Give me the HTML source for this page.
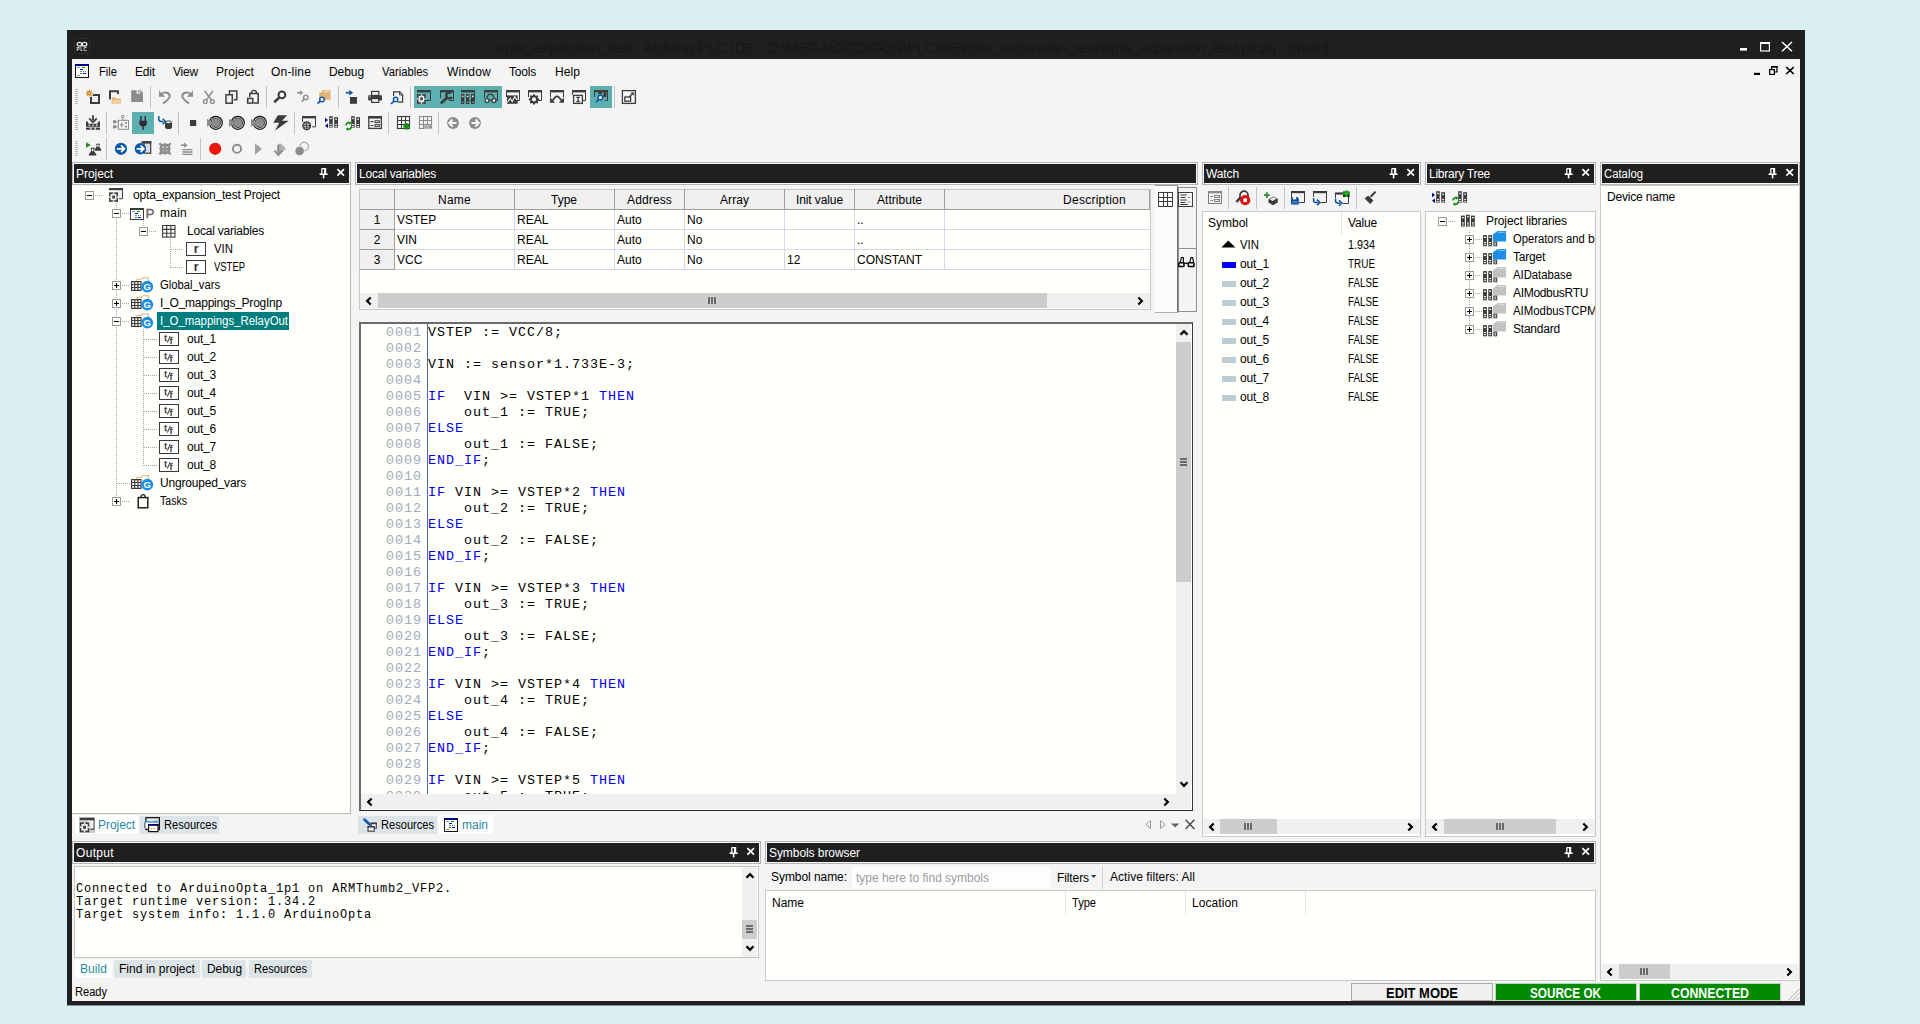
<!DOCTYPE html>
<html lang="en"><head><meta charset="utf-8"><title>opta_expansion_test - Arduino PLC IDE</title>
<style>
html,body{margin:0;padding:0}
body{width:1920px;height:1024px;overflow:hidden;background:#d9efef;position:relative;
 font-family:"Liberation Sans",sans-serif;font-size:12px;color:#000}
div,span.t,svg.i{position:absolute;box-sizing:border-box}
span.t{white-space:pre;display:block}
svg.i{overflow:visible}
.ph{background:#1f1f1f;border:1px solid #f8f8f8;outline:1px solid #b4b4b4}

</style></head>
<body>
<div style="left:67px;top:30px;width:1738px;height:975px;background:#1f1f1f;"></div>
<div style="left:67px;top:1005px;width:1738px;height:1px;background:#8a9696;"></div>
<div style="left:72px;top:59px;width:1728px;height:942px;background:#f4f4f4;"></div>
<svg class="i" style="left:74px;top:38px" width="16" height="16" viewBox="0 0 16 16"><rect x=".5" y=".5" width="15" height="15" rx="3" fill="#1c1c1c" stroke="#2e2e38" stroke-width="1"/><g fill="none" stroke="#f2f2f2" stroke-width="1.3"><ellipse cx="5.500" cy="6.200" rx="2.300" ry="1.900"/><ellipse cx="10.500" cy="6.200" rx="2.300" ry="1.900"/></g><text x="8" y="13.200" font-family="Liberation Sans, sans-serif" font-size="4.600" font-weight="bold" fill="#e8e8e8" text-anchor="middle" letter-spacing=".6">PLC</text></svg>
<span class="t" style="top:37.30px;font:15px/21px 'Liberation Sans',sans-serif;color:#17171b;left:497px;letter-spacing:-0.200px;">opta<span style="position:relative;top:-1px">_</span>expansion<span style="position:relative;top:-1px">_</span>test - Arduino PLC IDE - D:\MEGA\CODIGOS\PLCIDE\opta<span style="position:relative;top:-1px">_</span>expansion<span style="position:relative;top:-1px">_</span>test\opta<span style="position:relative;top:-1px">_</span>expansion<span style="position:relative;top:-1px">_</span>test.plcprj - [main]</span>
<svg class="i" style="left:1736px;top:38px" width="62" height="16" viewBox="0 0 62 16"><rect x="4" y="10" width="7" height="2.600" fill="#fff"/><rect x="24.600" y="4.800" width="8.800" height="8.200" fill="none" stroke="#fff" stroke-width="1.200"/><rect x="24" y="4" width="10" height="2" fill="#fff"/><path d="M46 4l10 9.200M56 4L46 13.200" stroke="#fff" stroke-width="1.500"/></svg>
<svg class="i" style="left:1750px;top:62px" width="48" height="16" viewBox="0 0 48 16"><rect x="4" y="10.800" width="6" height="2.200" fill="#000"/><rect x="19.600" y="7.600" width="4.800" height="4.800" fill="none" stroke="#000" stroke-width="1.200"/><path d="M21.600 7V4.600h5.400V10h-2.200" fill="none" stroke="#000" stroke-width="1.200"/><rect x="21" y="4" width="6.600" height="1.600" fill="#000"/><path d="M36.200 5.200l7.600 6.800M43.800 5.200l-7.600 6.800" stroke="#000" stroke-width="1.600"/></svg>
<svg class="i" style="left:75px;top:64px" width="14" height="14" viewBox="0 0 14 14"><g shape-rendering="crispEdges"><rect x="0" y="0" width="14" height="14" fill="#111"/><rect x="1" y="2" width="12" height="11" fill="#fff"/><rect x="0" y="0" width="14" height="2" fill="#000080"/><rect x="2" y="3" width="3" height="1" fill="#909090"/><rect x="7" y="3" width="3" height="1" fill="#00a000"/><rect x="5" y="5" width="3" height="1" fill="#0000ff"/><rect x="5" y="7" width="2" height="1" fill="#909090"/><rect x="8" y="7" width="1" height="1" fill="#00a000"/><rect x="10" y="7" width="1" height="1" fill="#909090"/><rect x="5" y="9" width="2" height="1" fill="#00a000"/><rect x="8" y="9" width="3" height="1" fill="#0000ff"/><rect x="2" y="11" width="3" height="1" fill="#909090"/></g></svg>
<span class="t" style="top:64.34px;font:12px/17px 'Liberation Sans',sans-serif;color:#000;left:99px;transform:scaleX(0.9305);transform-origin:0 0;">File</span>
<span class="t" style="top:64.34px;font:12px/17px 'Liberation Sans',sans-serif;color:#000;left:135px;letter-spacing:-0.172px;">Edit</span>
<span class="t" style="top:64.34px;font:12px/17px 'Liberation Sans',sans-serif;color:#000;left:173px;letter-spacing:-0.199px;">View</span>
<span class="t" style="top:64.34px;font:12px/17px 'Liberation Sans',sans-serif;color:#000;left:216px;letter-spacing:0.092px;">Project</span>
<span class="t" style="top:64.34px;font:12px/17px 'Liberation Sans',sans-serif;color:#000;left:271px;letter-spacing:0.188px;">On-line</span>
<span class="t" style="top:64.34px;font:12px/17px 'Liberation Sans',sans-serif;color:#000;left:329px;letter-spacing:-0.075px;">Debug</span>
<span class="t" style="top:64.34px;font:12px/17px 'Liberation Sans',sans-serif;color:#000;left:382px;transform:scaleX(0.9361);transform-origin:0 0;">Variables</span>
<span class="t" style="top:64.34px;font:12px/17px 'Liberation Sans',sans-serif;color:#000;left:447px;letter-spacing:0.219px;">Window</span>
<span class="t" style="top:64.34px;font:12px/17px 'Liberation Sans',sans-serif;color:#000;left:509px;letter-spacing:-0.203px;">Tools</span>
<span class="t" style="top:64.34px;font:12px/17px 'Liberation Sans',sans-serif;color:#000;left:555px;letter-spacing:0.078px;">Help</span>
<div style="left:75px;top:89px;width:3px;height:1px;background:#b8b8b8;"></div>
<div style="left:75px;top:91px;width:3px;height:1px;background:#b8b8b8;"></div>
<div style="left:75px;top:93px;width:3px;height:1px;background:#b8b8b8;"></div>
<div style="left:75px;top:95px;width:3px;height:1px;background:#b8b8b8;"></div>
<div style="left:75px;top:97px;width:3px;height:1px;background:#b8b8b8;"></div>
<div style="left:75px;top:99px;width:3px;height:1px;background:#b8b8b8;"></div>
<div style="left:75px;top:101px;width:3px;height:1px;background:#b8b8b8;"></div>
<div style="left:75px;top:103px;width:3px;height:1px;background:#b8b8b8;"></div>
<svg class="i" style="left:85px;top:89px" width="16" height="16" viewBox="0 0 16 16"><rect x="6" y="6" width="8" height="8" fill="none" stroke="#3c3c3c" stroke-width="2"/><circle cx="4.3" cy="4.2" r="3.9" fill="#f4f4f4"/><g stroke="#d47a00" stroke-width="1.1"><path d="M4.3 .8v6.8M.9 4.2h6.8M1.9 1.8l4.8 4.8M6.7 1.8L1.9 6.6"/></g><circle cx="4.3" cy="4.2" r="1.2" fill="#f4f4f4" stroke="#d47a00" stroke-width=".8"/></svg>
<svg class="i" style="left:107px;top:89px" width="16" height="16" viewBox="0 0 16 16"><path d="M3 10.5V2.2h8V5" fill="none" stroke="#3c3c3c" stroke-width="2"/><path d="M5.2 8.2h3l1 1.2h4.6v5.4H4.4z" fill="#e2b577"/><path d="M6.6 11h7.6l-1.2 3.8H4.6z" fill="#efd0a0"/></svg>
<svg class="i" style="left:129px;top:89px" width="16" height="16" viewBox="0 0 16 16"><path d="M2.2 1.3h9.6L14 3.5V13H2.2z" fill="#8c8c8c"/><rect x="7.6" y="1.3" width="3.6" height="3.4" fill="#f4f4f4"/><rect x="9.3" y="1.3" width="1.2" height="2.4" fill="#8c8c8c"/></svg>
<div style="left:150px;top:86px;width:1px;height:22px;background:#c4c4c4;"></div>
<svg class="i" style="left:157px;top:89px" width="16" height="16" viewBox="0 0 16 16"><path d="M4.2 5.2C8 2 13.2 3.8 12.6 7.6 12.2 10 9 12.2 6 14.4" fill="none" stroke="#8c8c8c" stroke-width="1.9" stroke-linecap="butt"/><path d="M2 1.6v6.2h6.2z" fill="#8c8c8c"/></svg>
<svg class="i" style="left:179px;top:89px" width="16" height="16" viewBox="0 0 16 16"><g transform="translate(16 0) scale(-1 1)"><path d="M4.2 5.2C8 2 13.2 3.8 12.6 7.6 12.2 10 9 12.2 6 14.4" fill="none" stroke="#8c8c8c" stroke-width="1.9" stroke-linecap="butt"/><path d="M2 1.6v6.2h6.2z" fill="#8c8c8c"/></g></svg>
<svg class="i" style="left:201px;top:89px" width="16" height="16" viewBox="0 0 16 16"><g fill="none" stroke="#8c8c8c" stroke-width="1.3"><circle cx="4.3" cy="12.6" r="1.9"/><circle cx="11.4" cy="12.6" r="1.9"/><path d="M3.6 1.6l6.9 9.6M12 1.6L5.2 11.2" stroke-width="1.5"/></g></svg>
<svg class="i" style="left:223px;top:89px" width="16" height="16" viewBox="0 0 16 16"><path d="M6.5 5V2h7.3v8.8h-3" fill="none" stroke="#3c3c3c" stroke-width="1.5"/><rect x="3" y="5.8" width="6.3" height="8.4" fill="none" stroke="#3c3c3c" stroke-width="1.5"/></svg>
<svg class="i" style="left:245px;top:89px" width="16" height="16" viewBox="0 0 16 16"><path d="M8.6 14H13.2V4.4H4.8V8" fill="none" stroke="#3c3c3c" stroke-width="1.5"/><path d="M6.4 4.4c0-4 5.2-4 5.2 0" fill="none" stroke="#3c3c3c" stroke-width="1.4"/><rect x="2.7" y="9.4" width="5" height="4.7" fill="none" stroke="#3c3c3c" stroke-width="1.5"/></svg>
<div style="left:266px;top:86px;width:1px;height:22px;background:#c4c4c4;"></div>
<svg class="i" style="left:272.0px;top:89px" width="16" height="16" viewBox="0 0 16 16"><circle cx="9.9" cy="5.9" r="3.4" fill="none" stroke="#3c3c3c" stroke-width="2"/><path d="M7.4 8.4L2.2 13.3" stroke="#3c3c3c" stroke-width="2.6" stroke-linecap="butt"/></svg>
<svg class="i" style="left:294.0px;top:89px" width="16" height="16" viewBox="0 0 16 16"><path d="M3 3.7h4" stroke="#8c8c8c" stroke-width="1.5"/><path d="M6 1.2l3.3 2.5L6 6.3z" fill="#8c8c8c"/><circle cx="11.8" cy="8.4" r="2.2" fill="none" stroke="#8c8c8c" stroke-width="1.3"/><path d="M10.2 10L7.6 12.8" stroke="#8c8c8c" stroke-width="1.6"/></svg>
<svg class="i" style="left:316.0px;top:89px" width="16" height="16" viewBox="0 0 16 16"><path d="M5.8 1.3h8.8v9.5H3.2V3.6h2.6z" fill="#e2b577"/><rect x="8" y="2.4" width="5.2" height=".9" fill="#f6e6cc"/><circle cx="6" cy="10.4" r="2.3" fill="#f4f4f4" stroke="#0a56a8" stroke-width="1.4"/><path d="M4.3 12.1L1.5 14.7" stroke="#0a56a8" stroke-width="1.7"/></svg>
<div style="left:338px;top:86px;width:1px;height:22px;background:#c4c4c4;"></div>
<svg class="i" style="left:344.0px;top:89px" width="16" height="16" viewBox="0 0 16 16"><path d="M1.8 3.7h4.4" stroke="#0a56a8" stroke-width="1.7"/><path d="M5.2 .9l4 2.8-4 2.9z" fill="#0a56a8"/><rect x="6" y="8" width="7" height="6.8" fill="#3c3c3c"/></svg>
<svg class="i" style="left:366.0px;top:89px" width="16" height="16" viewBox="0 0 16 16"><rect x="5.6" y="2.4" width="7.2" height="4" fill="#f4f4f4" stroke="#3c3c3c" stroke-width="1.2"/><rect x="2.2" y="6.2" width="13.8" height="5.4" rx=".8" fill="#3c3c3c"/><rect x="5.6" y="9.6" width="7.2" height="3.8" fill="#f4f4f4" stroke="#3c3c3c" stroke-width="1.2"/><rect x="3.4" y="7.4" width="1.2" height="1" fill="#f4f4f4"/></svg>
<svg class="i" style="left:389px;top:89px" width="16" height="16" viewBox="0 0 16 16"><path d="M4.6 7V2.9h6.2l2.8 2.8v7.4H8.6" fill="none" stroke="#3c3c3c" stroke-width="1.2"/><path d="M10.6 3v3h3" fill="none" stroke="#3c3c3c" stroke-width="1"/><circle cx="6.6" cy="10.4" r="2.2" fill="#f4f4f4" stroke="#0a56a8" stroke-width="1.4"/><path d="M5 12L2 14.8" stroke="#0a56a8" stroke-width="1.7"/></svg>
<div style="left:410px;top:86px;width:1px;height:22px;background:#c4c4c4;"></div>
<div style="left:414px;top:86px;width:22px;height:22px;background:#5cb0b0;"></div>
<svg class="i" style="left:417px;top:89px" width="16" height="16" viewBox="0 0 16 16"><path d="M0 1h14v2.4H0z" fill="#3c3c3c"/><path d="M13.5 3v8.5H9" fill="none" stroke="#3c3c3c" stroke-width="1"/><path d="M0 5.2h8.8v9.6H0z" fill="#3c3c3c"/><rect x="1.6" y="6.8" width="5.6" height="6.4" fill="#e4eeee"/><rect x="3.2" y="8.4" width="2.6" height="2.8" fill="#3c3c3c"/><rect x="3.8" y="5.2" width="1.4" height="1.6" fill="#e4eeee"/><rect x="3.8" y="13.2" width="1.4" height="1.6" fill="#e4eeee"/><rect x="0" y="9.2" width="1.6" height="1.4" fill="#e4eeee"/><rect x="7.2" y="9.2" width="1.6" height="1.4" fill="#e4eeee"/></svg>
<div style="left:436px;top:86px;width:22px;height:22px;background:#5cb0b0;"></div>
<svg class="i" style="left:440.0px;top:89px" width="16" height="16" viewBox="0 0 16 16"><path d="M0 1h14v2.4H0z" fill="#3c3c3c"/><path d="M13.5 3v8.5H9" fill="none" stroke="#3c3c3c" stroke-width="1"/><path d="M11.200 4.200a3 3 0 1 0 .6 3.800" fill="none" stroke="#3c3c3c" stroke-width="2.500"/><path d="M7.600 8.200L.8 14.400" stroke="#3c3c3c" stroke-width="2.700"/><path d="M.5 3v6" stroke="#3c3c3c" stroke-width="1"/></svg>
<div style="left:458px;top:86px;width:22px;height:22px;background:#5cb0b0;"></div>
<svg class="i" style="left:461px;top:89px" width="16" height="16" viewBox="0 0 16 16"><path d="M0 1h14v2.4H0z" fill="#3c3c3c"/><path d="M13.5 3v8.5H9" fill="none" stroke="#3c3c3c" stroke-width="1"/><rect x="0" y="5" width="3.3" height="10" fill="#3c3c3c"/><rect x="5" y="5" width="3.3" height="10" fill="#3c3c3c"/><rect x="10" y="5" width="3.6" height="10" fill="#3c3c3c"/><rect x=".9" y="6.6" width="1.5" height="1.6" fill="#e4eeee"/><rect x="5.9" y="6.6" width="1.5" height="1.6" fill="#e4eeee"/><rect x="11" y="6.6" width="1.6" height="1.6" fill="#e4eeee"/><rect x=".9" y="12.6" width="1.5" height="1.2" fill="#60b0b0"/><rect x="5.9" y="12.6" width="1.5" height="1.2" fill="#60b0b0"/><rect x="11" y="12.6" width="1.6" height="1.2" fill="#60b0b0"/></svg>
<div style="left:480px;top:86px;width:22px;height:22px;background:#5cb0b0;"></div>
<svg class="i" style="left:484.0px;top:89px" width="16" height="16" viewBox="0 0 16 16"><path d="M0 1h14v2.4H0z" fill="#3c3c3c"/><path d="M13.5 3v8.5H9" fill="none" stroke="#3c3c3c" stroke-width="1"/><g fill="#e8f2f2" stroke="#3c3c3c" stroke-width="1.3"><circle cx="3" cy="11.6" r="2"/><circle cx="10" cy="11.6" r="2"/></g><path d="M2.4 9.6L4.6 5.4h3.6l2.6 4.4M5 11.2h3" fill="none" stroke="#3c3c3c" stroke-width="1.2"/><path d="M.5 3v6" stroke="#3c3c3c"/></svg>
<svg class="i" style="left:506.0px;top:89px" width="16" height="16" viewBox="0 0 16 16"><path d="M0 1h14v2.4H0z" fill="#3c3c3c"/><path d="M13.5 3v8.5H9" fill="none" stroke="#3c3c3c" stroke-width="1"/><path d="M.5 3v5" stroke="#3c3c3c"/><path d="M1 6.4h10.6v8.4H1z" fill="#3c3c3c"/><path d="M1.4 13.4l2.8-4.2 2 3.4 2.6-5 2 3.4" fill="none" stroke="#f4f4f4" stroke-width="1.1"/></svg>
<svg class="i" style="left:528.0px;top:89px" width="16" height="16" viewBox="0 0 16 16"><path d="M0 1h14v2.4H0z" fill="#3c3c3c"/><path d="M13.5 3v8.5H9" fill="none" stroke="#3c3c3c" stroke-width="1"/><path d="M.5 3v5" stroke="#3c3c3c"/><circle cx="6" cy="10.4" r="3.1" fill="none" stroke="#3c3c3c" stroke-width="2"/><g stroke="#3c3c3c" stroke-width="1.7"><path d="M6 5.2v2M6 13.6v2M.8 10.4h2M9.2 10.4h2M2.3 6.7l1.4 1.4M8.3 12.7l1.4 1.4M9.7 6.7L8.3 8.1M3.7 12.7l-1.4 1.4"/></g><circle cx="6" cy="10.4" r="1.1" fill="#f4f4f4"/></svg>
<svg class="i" style="left:550.0px;top:89px" width="16" height="16" viewBox="0 0 16 16"><path d="M0 1h14v2.4H0z" fill="#3c3c3c"/><path d="M.5 3v5M13.5 3v5" stroke="#3c3c3c"/><path d="M0 8.6l0 5.2h5.2z" fill="#3c3c3c"/><path d="M14 8.6v5.2H8.8z" fill="#3c3c3c"/><path d="M2 12l3-3.6c1.400-1.400 2.600-1.400 4 0L12 12" fill="none" stroke="#3c3c3c" stroke-width="1.7"/></svg>
<svg class="i" style="left:572.0px;top:89px" width="16" height="16" viewBox="0 0 16 16"><path d="M0 1h14v2.4H0z" fill="#3c3c3c"/><path d="M13.5 3v8.5H9" fill="none" stroke="#3c3c3c" stroke-width="1"/><path d="M.5 3v3" stroke="#3c3c3c"/><rect x="1.6" y="6.4" width="8.800" height="8" fill="#f4f4f4" stroke="#3c3c3c" stroke-width="1.3"/><path d="M4.400 8.400h3.400M4.400 12.600h3.400M6.100 8.400v4.200" stroke="#3c3c3c" stroke-width="1.300"/></svg>
<div style="left:590px;top:86px;width:22px;height:22px;background:#5cb0b0;"></div>
<svg class="i" style="left:594.0px;top:89px" width="16" height="16" viewBox="0 0 16 16"><path d="M0 1h14v2.2H0z" fill="#3c3c3c"/><path d="M.5 3v5M13.500 3v8.500H11" fill="none" stroke="#3c3c3c"/><rect x="4.400" y="2.600" width="3.600" height="2.600" fill="#3c3c3c"/><rect x="9.400" y="2.600" width="3" height="5.400" fill="#3c3c3c"/><circle cx="6.400" cy="8.600" r="2.400" fill="#e8f4f4" stroke="#0a56a8" stroke-width="1.400"/><path d="M4.800 10.400L2 13.200" stroke="#0a56a8" stroke-width="1.800"/></svg>
<div style="left:614px;top:86px;width:1px;height:22px;background:#c4c4c4;"></div>
<svg class="i" style="left:621px;top:89px" width="16" height="16" viewBox="0 0 16 16"><rect x="1.400" y="1.600" width="13" height="12.800" fill="none" stroke="#3c3c3c" stroke-width="1.300"/><rect x="3.800" y="8" width="5.800" height="4.200" fill="none" stroke="#3c3c3c" stroke-width="1.300"/><path d="M8 8.200l4.400-4.400" stroke="#3c3c3c" stroke-width="1.300"/><path d="M9.400 3.400h3.400v3.400z" fill="#3c3c3c"/></svg>
<div style="left:75px;top:115px;width:3px;height:1px;background:#b8b8b8;"></div>
<div style="left:75px;top:117px;width:3px;height:1px;background:#b8b8b8;"></div>
<div style="left:75px;top:119px;width:3px;height:1px;background:#b8b8b8;"></div>
<div style="left:75px;top:121px;width:3px;height:1px;background:#b8b8b8;"></div>
<div style="left:75px;top:123px;width:3px;height:1px;background:#b8b8b8;"></div>
<div style="left:75px;top:125px;width:3px;height:1px;background:#b8b8b8;"></div>
<div style="left:75px;top:127px;width:3px;height:1px;background:#b8b8b8;"></div>
<div style="left:75px;top:129px;width:3px;height:1px;background:#b8b8b8;"></div>
<svg class="i" style="left:85px;top:115px" width="16" height="16" viewBox="0 0 16 16"><path d="M8 .3v5" stroke="#3c3c3c" stroke-width="1.800"/><path d="M4.200 3.400L8 7.200l3.800-3.800" fill="none" stroke="#3c3c3c" stroke-width="1.700"/><path d="M1 6.400h1.600l.9 2.400h9l.9-2.400H15v8.400H1z" fill="#3c3c3c"/><g fill="#f4f4f4"><rect x="3.600" y="9.600" width="1.500" height="1.300"/><rect x="7.250" y="9.600" width="1.500" height="1.300"/><rect x="10.900" y="9.600" width="1.500" height="1.300"/><rect x="1" y="11.800" width="14" height=".8"/><rect x="5.200" y="12.600" width="1.300" height="2.200"/><rect x="9.500" y="12.600" width="1.300" height="2.200"/></g></svg>
<div style="left:106px;top:112px;width:1px;height:22px;background:#c4c4c4;"></div>
<svg class="i" style="left:113px;top:115px" width="16" height="16" viewBox="0 0 16 16"><g fill="none" stroke="#8c8c8c" stroke-width="1"><rect x="5.300" y="5.300" width="10.200" height="9"/><rect x=".5" y="5.800" width="2" height="2"/><rect x=".5" y="10.800" width="2" height="2"/><rect x="8.800" y=".5" width="2" height="2"/><path d="M2.500 6.800h2.800M2.500 11.800h2.800M9.800 2.500v2.800M7 9.800h3.400M8.700 7.400v5M11.800 8h2.200M11.800 11.600h2.200M12.900 7v2.200M12.900 10.500v2.200"/></g></svg>
<div style="left:132px;top:112px;width:22px;height:22px;background:#5cb0b0;"></div>
<svg class="i" style="left:135px;top:115px" width="16" height="16" viewBox="0 0 16 16"><path d="M5.300 1h1.400v4.700h2.800V1h1.400v4.700h.9v4.100L9.500 11.600H8.800v3.300H7.500v-3.300H6.700L4.400 9.800V5.700h.9z" fill="#2e2a3a"/></svg>
<svg class="i" style="left:157px;top:115px" width="16" height="16" viewBox="0 0 16 16"><path d="M1.800 1v3.200c0 1.600.8 2.200 2.400 2.200h2" fill="none" stroke="#0a56a8" stroke-width="1.500"/><path d="M5.600 3.800l2.800 2.600-2.800 2.600" fill="none" stroke="#0a56a8" stroke-width="1.500"/><path d="M8 7.200v5.200c0 2.200 7 2.200 7 0V7.200z" fill="#3c3c3c"/><ellipse cx="11.500" cy="7.200" rx="3" ry="1.300" fill="#f4f4f4" stroke="#3c3c3c" stroke-width="1"/></svg>
<div style="left:178px;top:112px;width:1px;height:22px;background:#c4c4c4;"></div>
<svg class="i" style="left:185px;top:115px" width="16" height="16" viewBox="0 0 16 16"><rect x="5" y="5" width="6.200" height="6" fill="#3c3c3c"/></svg>
<svg class="i" style="left:207px;top:115px" width="16" height="16" viewBox="0 0 16 16"><circle cx="8.800" cy="7.800" r="6.500" fill="#f6f6f6" stroke="#0c0c0c" stroke-width="1.200"/><circle cx="8.800" cy="7.800" r="4.800" fill="#8c8c8c" stroke="#3a3a3a" stroke-width=".9"/><path d="M0 3.800l6 4-6 4z" fill="#8c8c8c"/></svg>
<svg class="i" style="left:229px;top:115px" width="16" height="16" viewBox="0 0 16 16"><circle cx="8.800" cy="7.800" r="6.500" fill="#f6f6f6" stroke="#0c0c0c" stroke-width="1.200"/><circle cx="8.800" cy="7.800" r="4.800" fill="#8c8c8c" stroke="#3a3a3a" stroke-width=".9"/><path d="M0 3.800l6 4-6 4z" fill="#8c8c8c"/></svg>
<svg class="i" style="left:251px;top:115px" width="16" height="16" viewBox="0 0 16 16"><circle cx="8.800" cy="7.800" r="6.500" fill="#f6f6f6" stroke="#0c0c0c" stroke-width="1.200"/><circle cx="8.800" cy="7.800" r="4.800" fill="#8c8c8c" stroke="#3a3a3a" stroke-width=".9"/><path d="M0 3.800l6 4-6 4z" fill="#8c8c8c"/></svg>
<svg class="i" style="left:273px;top:115px" width="16" height="16" viewBox="0 0 16 16"><path d="M4.900.3h9.200L9.100 5.700h6.600L2 15.700l4.200-7.900H.3z" fill="#3c3c3c"/></svg>
<div style="left:294px;top:112px;width:1px;height:22px;background:#c4c4c4;"></div>
<svg class="i" style="left:301px;top:115px" width="16" height="16" viewBox="0 0 16 16"><path d="M1 1h14v2.400H1z" fill="#3c3c3c"/><path d="M1.500 3v4M14.500 3v8.800H11" fill="none" stroke="#3c3c3c"/><circle cx="5.700" cy="10.700" r="3.900" fill="#f4f4f4" stroke="#3c3c3c" stroke-width="1.200"/><path d="M1.800 10.700h7.800M5.700 6.800v7.800" stroke="#3c3c3c" stroke-width="1"/><path d="M3.600 7.400c-1 2-1 4.600 0 6.600M7.800 7.400c1 2 1 4.600 0 6.600M2.400 8.700h6.600M2.400 12.700h6.600" fill="none" stroke="#3c3c3c" stroke-width=".8"/></svg>
<svg class="i" style="left:323px;top:115px" width="16" height="16" viewBox="0 0 16 16"><rect x="6.200" y="1.200" width="3.500" height="11.400" fill="#3c3c3c"/><rect x="11.200" y="2.200" width="3.800" height="10.400" fill="#3c3c3c"/><g fill="#f4f4f4"><rect x="7.100" y="2.800" width="1.700" height="1.300"/><rect x="12.300" y="3.600" width="1.700" height="1.300"/><rect x="7.100" y="8.900" width="1.700" height="1.100"/><rect x="12.300" y="8.900" width="1.700" height="1.100"/><rect x="7.100" y="10.900" width="1.700" height="1.100"/><rect x="12.300" y="10.900" width="1.700" height="1.100"/></g><path d="M2 2.800l3 2.200-3 2.200z" fill="#000088"/><path d="M5 8.600L2 10.800 5 13z" fill="#000088"/></svg>
<svg class="i" style="left:345px;top:115px" width="16" height="16" viewBox="0 0 16 16"><rect x="6.200" y="1.200" width="3.500" height="11.400" fill="#3c3c3c"/><rect x="11.200" y="2.200" width="3.800" height="10.400" fill="#3c3c3c"/><g fill="#f4f4f4"><rect x="7.100" y="2.800" width="1.700" height="1.300"/><rect x="12.300" y="3.600" width="1.700" height="1.300"/><rect x="7.100" y="8.900" width="1.700" height="1.100"/><rect x="12.300" y="8.900" width="1.700" height="1.100"/><rect x="7.100" y="10.900" width="1.700" height="1.100"/><rect x="12.300" y="10.900" width="1.700" height="1.100"/></g><g fill="none" stroke="#0a940a" stroke-width="1.700"><path d="M.9 10.400a2.800 2.800 0 0 1 4.600-2"/><path d="M6.300 11.600a2.800 2.800 0 0 1-4.600 2"/></g><path d="M3.600 6.200l2.800 1.600-2.200 2z" fill="#0a940a"/><path d="M3.600 15.800L.8 14.200l2.200-2z" fill="#0a940a"/></svg>
<svg class="i" style="left:367px;top:115px" width="16" height="16" viewBox="0 0 16 16"><rect x="1.800" y="1.800" width="12.600" height="11.600" fill="none" stroke="#3c3c3c" stroke-width="1.300"/><rect x="1.200" y="1" width="13.800" height="2.600" fill="#3c3c3c"/><g fill="none" stroke="#3c3c3c" stroke-width="1"><rect x="8" y="5.800" width="4.400" height="1.800"/><rect x="8" y="9.600" width="4.400" height="1.800"/></g><path d="M3.600 6.700h2.800M3.600 10.500h2.800" stroke="#3c3c3c" stroke-width="1.200"/></svg>
<div style="left:388px;top:112px;width:1px;height:22px;background:#c4c4c4;"></div>
<svg class="i" style="left:395px;top:115px" width="16" height="16" viewBox="0 0 16 16"><g fill="none" stroke="#3c3c3c" stroke-width="1.100"><rect x="2.500" y="1.500" width="12" height="12"/><path d="M6.500 1.500v12M10.500 1.500v12M2.500 5.500h12M2.500 9.500h12"/></g><path d="M11.600 8.200v6.400M8.400 11.400h6.400" stroke="#0a940a" stroke-width="2.800"/></svg>
<svg class="i" style="left:417px;top:115px" width="16" height="16" viewBox="0 0 16 16"><g fill="none" stroke="#8c8c8c" stroke-width="1.100"><rect x="2.500" y="1.500" width="12" height="12"/><path d="M6.500 1.500v12M10.500 1.500v12M2.500 5.500h12M2.500 9.500h12"/></g><rect x="7" y="10" width="8" height="4" fill="#f4f4f4"/><rect x="7.400" y="10.400" width="7.600" height="3.200" fill="#8c8c8c"/><rect x="8" y="11.600" width="5" height=".8" fill="#d8d8d8"/></svg>
<div style="left:438px;top:112px;width:1px;height:22px;background:#c4c4c4;"></div>
<svg class="i" style="left:445px;top:115px" width="16" height="16" viewBox="0 0 16 16"><circle cx="8" cy="8" r="5.900" fill="#8c8c8c"/><path d="M4.200 8h7.400M7.600 4.600L4.200 8l3.400 3.400" fill="none" stroke="#f4f4f4" stroke-width="2.100"/></svg>
<svg class="i" style="left:467px;top:115px" width="16" height="16" viewBox="0 0 16 16"><circle cx="8" cy="8" r="5.900" fill="#8c8c8c"/><path d="M11.800 8H4.400M8.400 4.600L11.800 8l-3.400 3.400" fill="none" stroke="#f4f4f4" stroke-width="2.100"/></svg>
<div style="left:75px;top:141px;width:3px;height:1px;background:#b8b8b8;"></div>
<div style="left:75px;top:143px;width:3px;height:1px;background:#b8b8b8;"></div>
<div style="left:75px;top:145px;width:3px;height:1px;background:#b8b8b8;"></div>
<div style="left:75px;top:147px;width:3px;height:1px;background:#b8b8b8;"></div>
<div style="left:75px;top:149px;width:3px;height:1px;background:#b8b8b8;"></div>
<div style="left:75px;top:151px;width:3px;height:1px;background:#b8b8b8;"></div>
<div style="left:75px;top:153px;width:3px;height:1px;background:#b8b8b8;"></div>
<div style="left:75px;top:155px;width:3px;height:1px;background:#b8b8b8;"></div>
<svg class="i" style="left:85px;top:141px" width="16" height="16" viewBox="0 0 16 16"><path d="M1 1.300l4.800 2.700L1 6.800z" fill="#1e8a1e"/><g transform="translate(9.6 2.8) scale(0.85)"><path d="M2.600 0h3.800v.9h-.8v2.600l2.200 3.300c.5.800 0 1.400-.9 1.400H1c-.9 0-1.400-.6-.9-1.400l2.200-3.300V.9h-.8z" fill="#3c3c3c"/><rect x="3.100" y="1" width="1.700" height="2.600" fill="#f4f4f4"/></g><g transform="translate(3.8 6.8) scale(0.95)"><path d="M2.600 0h3.800v.9h-.8v2.600l2.200 3.300c.5.800 0 1.400-.9 1.400H1c-.9 0-1.400-.6-.9-1.400l2.200-3.300V.9h-.8z" fill="#3c3c3c"/><rect x="3.100" y="1" width="1.700" height="2.600" fill="#f4f4f4"/></g></svg>
<div style="left:106px;top:138px;width:1px;height:22px;background:#c4c4c4;"></div>
<svg class="i" style="left:113px;top:141px" width="16" height="16" viewBox="0 0 16 16"><circle cx="8" cy="7.800" r="6.100" fill="#0a56a8"/><path d="M3.800 7.800h7.600M8 4.400l3.500 3.400L8 11.200" fill="none" stroke="#fff" stroke-width="1.800"/></svg>
<svg class="i" style="left:135px;top:141px" width="16" height="16" viewBox="0 0 16 16"><rect x="9" y="1" width="6.700" height="11.200" fill="#dcdcdc" stroke="#3c3c3c" stroke-width="1.200"/><rect x="6.400" y=".2" width="9.900" height="2.400" fill="#3c3c3c"/><circle cx="5.400" cy="7.800" r="5.700" fill="#0a56a8"/><path d="M1.600 7.800h7M5.600 4.600l3.200 3.200-3.200 3.200" fill="none" stroke="#fff" stroke-width="1.800"/></svg>
<svg class="i" style="left:157px;top:141px" width="16" height="16" viewBox="0 0 16 16"><circle cx="8" cy="7.800" r="5.600" fill="#8c8c8c"/><path d="M2.400 2.200l3 3M13.600 2.200l-3 3M2.400 13.400l3-3M13.600 13.400l-3-3" stroke="#8c8c8c" stroke-width="2.200"/><g fill="#d8d8d8"><circle cx="6.200" cy="6.200" r=".9"/><circle cx="9.800" cy="6.200" r=".9"/><circle cx="6.200" cy="9.600" r=".8"/><circle cx="9.800" cy="9.600" r=".8"/></g></svg>
<svg class="i" style="left:179px;top:141px" width="16" height="16" viewBox="0 0 16 16"><path d="M1.800 4.200h4.400" stroke="#8c8c8c" stroke-width="1.500"/><path d="M5.200 1.600l3.400 2.600-3.400 2.600z" fill="#8c8c8c"/><path d="M3.400 8.600H13.400M3.400 11H13.400M3.400 13.400H13.400" stroke="#8c8c8c" stroke-width="1.300"/></svg>
<div style="left:200px;top:138px;width:1px;height:22px;background:#c4c4c4;"></div>
<svg class="i" style="left:207px;top:141px" width="16" height="16" viewBox="0 0 16 16"><circle cx="8.200" cy="7.800" r="6.100" fill="#e8190a"/></svg>
<svg class="i" style="left:229px;top:141px" width="16" height="16" viewBox="0 0 16 16"><circle cx="8" cy="7.800" r="4.100" fill="none" stroke="#8c8c8c" stroke-width="1.900"/></svg>
<svg class="i" style="left:250.0px;top:141px" width="16" height="16" viewBox="0 0 16 16"><path d="M5 2.200l7 5.800-7 5.800z" fill="#a0a0a0"/></svg>
<svg class="i" style="left:270.5px;top:141px" width="16" height="16" viewBox="0 0 16 16"><path d="M9 2l6 5.600-6 5.600-3-2.800V5z" fill="#b0b0b0"/><path d="M7.400 3.600v9" stroke="#8c8c8c" stroke-width="1.800"/><path d="M3.400 9.600l4 4.400 4-4.400" fill="none" stroke="#8c8c8c" stroke-width="1.900"/></svg>
<svg class="i" style="left:293.0px;top:141px" width="16" height="16" viewBox="0 0 16 16"><circle cx="11.200" cy="5.500" r="4.300" fill="none" stroke="#8c8c8c" stroke-width="1"/><circle cx="6.600" cy="10" r="4.700" fill="#8c8c8c" stroke="#f4f4f4" stroke-width=".8"/></svg>
<div class="ph" style="left:73px;top:163px;width:277px;height:21px;"></div>
<span class="t" style="top:166.34px;font:12px/17px 'Liberation Sans',sans-serif;color:#fff;left:76px;letter-spacing:-0.051px;">Project</span>
<svg class="i" style="left:319px;top:168px" width="28" height="11" viewBox="0 0 28 11"><path d="M2.800 .6h3.600M2.800 .6v5.200" fill="none" stroke="#fff" stroke-width="1.300"/><rect x="5" y="0" width="2.200" height="5.800" fill="#fff"/><rect x=".6" y="5.400" width="8" height="1.600" fill="#fff"/><rect x="3.800" y="6.800" width="1.600" height="3.600" fill="#fff"/><path d="M18.400 1.200l6.600 6.400M25 1.200l-6.600 6.400" stroke="#fff" stroke-width="1.700"/></svg>
<div style="left:72px;top:186px;width:279px;height:628px;background:#fffffc;border-right:1px solid #b9b9b9;border-bottom:1px solid #b9b9b9;"></div>
<div style="left:116px;top:203px;width:1px;height:6px;background:repeating-linear-gradient(180deg,#a8a8a8 0 1px,transparent 1px 2px);"></div>
<div style="left:116px;top:219px;width:1px;height:62px;background:repeating-linear-gradient(180deg,#a8a8a8 0 1px,transparent 1px 2px);"></div>
<div style="left:116px;top:291px;width:1px;height:8px;background:repeating-linear-gradient(180deg,#a8a8a8 0 1px,transparent 1px 2px);"></div>
<div style="left:116px;top:309px;width:1px;height:8px;background:repeating-linear-gradient(180deg,#a8a8a8 0 1px,transparent 1px 2px);"></div>
<div style="left:116px;top:327px;width:1px;height:170px;background:repeating-linear-gradient(180deg,#a8a8a8 0 1px,transparent 1px 2px);"></div>
<div style="left:143px;top:221px;width:1px;height:6px;background:repeating-linear-gradient(180deg,#a8a8a8 0 1px,transparent 1px 2px);"></div>
<div style="left:170px;top:239px;width:1px;height:29px;background:repeating-linear-gradient(180deg,#a8a8a8 0 1px,transparent 1px 2px);"></div>
<div style="left:171px;top:249px;width:12px;height:1px;background:repeating-linear-gradient(90deg,#a8a8a8 0 1px,transparent 1px 2px);"></div>
<div style="left:171px;top:267px;width:12px;height:1px;background:repeating-linear-gradient(90deg,#a8a8a8 0 1px,transparent 1px 2px);"></div>
<div style="left:143px;top:329px;width:1px;height:137px;background:repeating-linear-gradient(180deg,#a8a8a8 0 1px,transparent 1px 2px);"></div>
<div style="left:144px;top:339px;width:13px;height:1px;background:repeating-linear-gradient(90deg,#a8a8a8 0 1px,transparent 1px 2px);"></div>
<div style="left:144px;top:357px;width:13px;height:1px;background:repeating-linear-gradient(90deg,#a8a8a8 0 1px,transparent 1px 2px);"></div>
<div style="left:144px;top:375px;width:13px;height:1px;background:repeating-linear-gradient(90deg,#a8a8a8 0 1px,transparent 1px 2px);"></div>
<div style="left:144px;top:393px;width:13px;height:1px;background:repeating-linear-gradient(90deg,#a8a8a8 0 1px,transparent 1px 2px);"></div>
<div style="left:144px;top:411px;width:13px;height:1px;background:repeating-linear-gradient(90deg,#a8a8a8 0 1px,transparent 1px 2px);"></div>
<div style="left:144px;top:429px;width:13px;height:1px;background:repeating-linear-gradient(90deg,#a8a8a8 0 1px,transparent 1px 2px);"></div>
<div style="left:144px;top:447px;width:13px;height:1px;background:repeating-linear-gradient(90deg,#a8a8a8 0 1px,transparent 1px 2px);"></div>
<div style="left:144px;top:465px;width:13px;height:1px;background:repeating-linear-gradient(90deg,#a8a8a8 0 1px,transparent 1px 2px);"></div>
<div style="left:95px;top:195px;width:8px;height:1px;background:repeating-linear-gradient(90deg,#a8a8a8 0 1px,transparent 1px 2px);"></div>
<div style="left:122px;top:213px;width:8px;height:1px;background:repeating-linear-gradient(90deg,#a8a8a8 0 1px,transparent 1px 2px);"></div>
<div style="left:122px;top:285px;width:8px;height:1px;background:repeating-linear-gradient(90deg,#a8a8a8 0 1px,transparent 1px 2px);"></div>
<div style="left:122px;top:303px;width:8px;height:1px;background:repeating-linear-gradient(90deg,#a8a8a8 0 1px,transparent 1px 2px);"></div>
<div style="left:122px;top:321px;width:8px;height:1px;background:repeating-linear-gradient(90deg,#a8a8a8 0 1px,transparent 1px 2px);"></div>
<div style="left:122px;top:501px;width:8px;height:1px;background:repeating-linear-gradient(90deg,#a8a8a8 0 1px,transparent 1px 2px);"></div>
<div style="left:117px;top:483px;width:14px;height:1px;background:repeating-linear-gradient(90deg,#a8a8a8 0 1px,transparent 1px 2px);"></div>
<div style="left:149px;top:231px;width:8px;height:1px;background:repeating-linear-gradient(90deg,#a8a8a8 0 1px,transparent 1px 2px);"></div>
<div style="left:85px;top:191px;width:9px;height:9px;background:#fff;border:1px solid #9a9a9a;"></div>
<div style="left:87px;top:195px;width:5px;height:1px;background:#000;"></div>
<div style="left:112px;top:209px;width:9px;height:9px;background:#fff;border:1px solid #9a9a9a;"></div>
<div style="left:114px;top:213px;width:5px;height:1px;background:#000;"></div>
<div style="left:139px;top:227px;width:9px;height:9px;background:#fff;border:1px solid #9a9a9a;"></div>
<div style="left:141px;top:231px;width:5px;height:1px;background:#000;"></div>
<div style="left:112px;top:281px;width:9px;height:9px;background:#fff;border:1px solid #9a9a9a;"></div>
<div style="left:114px;top:285px;width:5px;height:1px;background:#000;"></div>
<div style="left:116px;top:283px;width:1px;height:5px;background:#000;"></div>
<div style="left:112px;top:299px;width:9px;height:9px;background:#fff;border:1px solid #9a9a9a;"></div>
<div style="left:114px;top:303px;width:5px;height:1px;background:#000;"></div>
<div style="left:116px;top:301px;width:1px;height:5px;background:#000;"></div>
<div style="left:112px;top:317px;width:9px;height:9px;background:#fff;border:1px solid #9a9a9a;"></div>
<div style="left:114px;top:321px;width:5px;height:1px;background:#000;"></div>
<div style="left:112px;top:497px;width:9px;height:9px;background:#fff;border:1px solid #9a9a9a;"></div>
<div style="left:114px;top:501px;width:5px;height:1px;background:#000;"></div>
<div style="left:116px;top:499px;width:1px;height:5px;background:#000;"></div>
<svg class="i" style="left:109px;top:188px" width="16" height="16" viewBox="0 0 16 16"><path d="M0 0h14v2.200H0z" fill="#3c3c3c"/><path d="M13.500 2v8.800H10" fill="none" stroke="#3c3c3c"/><rect x="8" y="3" width="5" height="7" fill="#eeeef4"/><path d="M0 4.400h9v9.400H0z" fill="#3c3c3c"/><rect x="1.500" y="6" width="6" height="6.200" fill="#f4f4f8"/><rect x="3.200" y="7.600" width="2.700" height="2.900" fill="#3c3c3c"/><rect x="3.800" y="4.400" width="1.500" height="1.600" fill="#f4f4f8"/><rect x="3.800" y="12.200" width="1.500" height="1.600" fill="#f4f4f8"/><rect x="0" y="8.300" width="1.500" height="1.500" fill="#f4f4f8"/><rect x="7.500" y="8.300" width="1.500" height="1.500" fill="#f4f4f8"/></svg>
<span class="t" style="top:187.34px;font:12px/17px 'Liberation Sans',sans-serif;color:#000;left:133px;letter-spacing:-0.166px;">opta<span style="position:relative;top:-1px">_</span>expansion<span style="position:relative;top:-1px">_</span>test Project</span>
<svg class="i" style="left:130px;top:208px" width="26" height="14" viewBox="0 0 26 14"><g shape-rendering="crispEdges"><rect x="0" y="0" width="14" height="12" fill="#3c3c3c"/><rect x="1" y="2" width="12" height="9" fill="#fff"/><rect x="0" y="0" width="14" height="2" fill="#3c3c3c"/><rect x="2" y="3" width="3" height="1" fill="#909090"/><rect x="7" y="3" width="3" height="1" fill="#00a000"/><rect x="5" y="5" width="3" height="1" fill="#0000ff"/><rect x="5" y="7" width="2" height="1" fill="#909090"/><rect x="8" y="7" width="1" height="1" fill="#00a000"/><rect x="10" y="7" width="1" height="1" fill="#909090"/><rect x="5" y="9" width="2" height="1" fill="#00a000"/><rect x="8" y="9" width="3" height="1" fill="#0000ff"/></g><text x="15.400" y="9.800" font-family="Liberation Sans, sans-serif" font-size="13.500" fill="#6a6060" stroke="#6a6060" stroke-width=".3">P</text></svg>
<span class="t" style="top:205.34px;font:12px/17px 'Liberation Sans',sans-serif;color:#000;left:160px;letter-spacing:0.246px;">main</span>
<svg class="i" style="left:162px;top:224px" width="16" height="16" viewBox="0 0 16 16"><g fill="none" stroke="#3c3c3c" stroke-width="1.100"><rect x=".6" y="1.500" width="12.400" height="11.600"/><path d="M4.700 1.500v11.600M8.900 1.500v11.600M.6 5.400H13M.6 9.300H13"/></g></svg>
<span class="t" style="top:223.34px;font:12px/17px 'Liberation Sans',sans-serif;color:#000;left:187px;letter-spacing:-0.203px;">Local variables</span>
<svg class="i" style="left:186px;top:242px" width="20" height="14" viewBox="0 0 20 14"><rect x=".5" y=".5" width="19" height="13" fill="#fff" stroke="#383838" stroke-width="1"/><text x="10.200" y="11" font-family="Liberation Sans, sans-serif" font-size="12.500" font-weight="bold" fill="#333" text-anchor="middle">r</text></svg>
<span class="t" style="top:241.34px;font:12px/17px 'Liberation Sans',sans-serif;color:#000;left:214px;transform:scaleX(0.9493);transform-origin:0 0;">VIN</span>
<svg class="i" style="left:186px;top:260px" width="20" height="14" viewBox="0 0 20 14"><rect x=".5" y=".5" width="19" height="13" fill="#fff" stroke="#383838" stroke-width="1"/><text x="10.200" y="11" font-family="Liberation Sans, sans-serif" font-size="12.500" font-weight="bold" fill="#333" text-anchor="middle">r</text></svg>
<span class="t" style="top:259.34px;font:12px/17px 'Liberation Sans',sans-serif;color:#000;left:214px;transform:scaleX(0.7876);transform-origin:0 0;">VSTEP</span>
<svg class="i" style="left:131px;top:276px" width="24" height="18" viewBox="0 0 24 18"><path d="M6 7V3.200h4.600l1.200-1.400h5.600v4" fill="none" stroke="#e2b577" stroke-width="1.100"/><g fill="none" stroke="#3c3c3c" stroke-width="1.200"><rect x=".6" y="5.600" width="9.400" height="8.800"/><path d="M3.700 5.600v8.800M6.900 5.600v8.800M.6 8.500H10M.6 11.500H10"/></g><circle cx="16.300" cy="10.700" r="5.900" fill="#1b8fe0"/><text x="16.300" y="14.200" font-family="Liberation Sans, sans-serif" font-size="9.500" font-weight="bold" fill="#fff" text-anchor="middle">G</text></svg>
<span class="t" style="top:277.34px;font:12px/17px 'Liberation Sans',sans-serif;color:#000;left:160px;transform:scaleX(0.9368);transform-origin:0 0;">Global<span style="position:relative;top:-1px">_</span>vars</span>
<svg class="i" style="left:131px;top:294px" width="24" height="18" viewBox="0 0 24 18"><path d="M6 7V3.200h4.600l1.200-1.400h5.600v4" fill="none" stroke="#e2b577" stroke-width="1.100"/><g fill="none" stroke="#3c3c3c" stroke-width="1.200"><rect x=".6" y="5.600" width="9.400" height="8.800"/><path d="M3.700 5.600v8.800M6.900 5.600v8.800M.6 8.500H10M.6 11.500H10"/></g><circle cx="16.300" cy="10.700" r="5.900" fill="#1b8fe0"/><text x="16.300" y="14.200" font-family="Liberation Sans, sans-serif" font-size="9.500" font-weight="bold" fill="#fff" text-anchor="middle">G</text></svg>
<span class="t" style="top:295.34px;font:12px/17px 'Liberation Sans',sans-serif;color:#000;left:160px;letter-spacing:-0.241px;">I<span style="position:relative;top:-1px">_</span>O<span style="position:relative;top:-1px">_</span>mappings<span style="position:relative;top:-1px">_</span>ProgInp</span>
<svg class="i" style="left:131px;top:312px" width="24" height="18" viewBox="0 0 24 18"><path d="M6 7V3.200h4.600l1.200-1.400h5.600v4" fill="none" stroke="#e2b577" stroke-width="1.100"/><g fill="none" stroke="#3c3c3c" stroke-width="1.200"><rect x=".6" y="5.600" width="9.400" height="8.800"/><path d="M3.700 5.600v8.800M6.900 5.600v8.800M.6 8.500H10M.6 11.500H10"/></g><circle cx="16.300" cy="10.700" r="5.900" fill="#1b8fe0"/><text x="16.300" y="14.200" font-family="Liberation Sans, sans-serif" font-size="9.500" font-weight="bold" fill="#fff" text-anchor="middle">G</text></svg>
<div style="left:157px;top:312px;width:132px;height:18px;background:#007e7e;"></div>
<span class="t" style="top:313.34px;font:12px/17px 'Liberation Sans',sans-serif;color:#fff;left:160px;transform:scaleX(0.9495);transform-origin:0 0;">I<span style="position:relative;top:-1px">_</span>O<span style="position:relative;top:-1px">_</span>mappings<span style="position:relative;top:-1px">_</span>RelayOut</span>
<svg class="i" style="left:131px;top:474px" width="24" height="18" viewBox="0 0 24 18"><path d="M6 7V3.200h4.600l1.200-1.400h5.600v4" fill="none" stroke="#e2b577" stroke-width="1.100"/><g fill="none" stroke="#3c3c3c" stroke-width="1.200"><rect x=".6" y="5.600" width="9.400" height="8.800"/><path d="M3.700 5.600v8.800M6.900 5.600v8.800M.6 8.500H10M.6 11.500H10"/></g><circle cx="16.300" cy="10.700" r="5.900" fill="#1b8fe0"/><text x="16.300" y="14.200" font-family="Liberation Sans, sans-serif" font-size="9.500" font-weight="bold" fill="#fff" text-anchor="middle">G</text></svg>
<span class="t" style="top:475.34px;font:12px/17px 'Liberation Sans',sans-serif;color:#000;left:160px;letter-spacing:-0.196px;">Ungrouped<span style="position:relative;top:-1px">_</span>vars</span>
<svg class="i" style="left:159px;top:332px" width="20" height="14" viewBox="0 0 20 14"><rect x=".5" y=".5" width="19" height="13" fill="#fff" stroke="#383838" stroke-width="1"/><text x="5.300" y="8.600" font-family="Liberation Sans, sans-serif" font-size="9.500" fill="#222" stroke="#222" stroke-width=".25">t</text><path d="M8.400 10.600l2.800-6.600" stroke="#333" stroke-width="1"/><text x="10.800" y="12.200" font-family="Liberation Sans, sans-serif" font-size="9.500" fill="#222" stroke="#222" stroke-width=".25">f</text></svg>
<span class="t" style="top:331.34px;font:12px/17px 'Liberation Sans',sans-serif;color:#000;left:187px;letter-spacing:-0.212px;">out<span style="position:relative;top:-1px">_</span>1</span>
<svg class="i" style="left:159px;top:350px" width="20" height="14" viewBox="0 0 20 14"><rect x=".5" y=".5" width="19" height="13" fill="#fff" stroke="#383838" stroke-width="1"/><text x="5.300" y="8.600" font-family="Liberation Sans, sans-serif" font-size="9.500" fill="#222" stroke="#222" stroke-width=".25">t</text><path d="M8.400 10.600l2.800-6.600" stroke="#333" stroke-width="1"/><text x="10.800" y="12.200" font-family="Liberation Sans, sans-serif" font-size="9.500" fill="#222" stroke="#222" stroke-width=".25">f</text></svg>
<span class="t" style="top:349.34px;font:12px/17px 'Liberation Sans',sans-serif;color:#000;left:187px;letter-spacing:-0.212px;">out<span style="position:relative;top:-1px">_</span>2</span>
<svg class="i" style="left:159px;top:368px" width="20" height="14" viewBox="0 0 20 14"><rect x=".5" y=".5" width="19" height="13" fill="#fff" stroke="#383838" stroke-width="1"/><text x="5.300" y="8.600" font-family="Liberation Sans, sans-serif" font-size="9.500" fill="#222" stroke="#222" stroke-width=".25">t</text><path d="M8.400 10.600l2.800-6.600" stroke="#333" stroke-width="1"/><text x="10.800" y="12.200" font-family="Liberation Sans, sans-serif" font-size="9.500" fill="#222" stroke="#222" stroke-width=".25">f</text></svg>
<span class="t" style="top:367.34px;font:12px/17px 'Liberation Sans',sans-serif;color:#000;left:187px;letter-spacing:-0.212px;">out<span style="position:relative;top:-1px">_</span>3</span>
<svg class="i" style="left:159px;top:386px" width="20" height="14" viewBox="0 0 20 14"><rect x=".5" y=".5" width="19" height="13" fill="#fff" stroke="#383838" stroke-width="1"/><text x="5.300" y="8.600" font-family="Liberation Sans, sans-serif" font-size="9.500" fill="#222" stroke="#222" stroke-width=".25">t</text><path d="M8.400 10.600l2.800-6.600" stroke="#333" stroke-width="1"/><text x="10.800" y="12.200" font-family="Liberation Sans, sans-serif" font-size="9.500" fill="#222" stroke="#222" stroke-width=".25">f</text></svg>
<span class="t" style="top:385.34px;font:12px/17px 'Liberation Sans',sans-serif;color:#000;left:187px;letter-spacing:-0.212px;">out<span style="position:relative;top:-1px">_</span>4</span>
<svg class="i" style="left:159px;top:404px" width="20" height="14" viewBox="0 0 20 14"><rect x=".5" y=".5" width="19" height="13" fill="#fff" stroke="#383838" stroke-width="1"/><text x="5.300" y="8.600" font-family="Liberation Sans, sans-serif" font-size="9.500" fill="#222" stroke="#222" stroke-width=".25">t</text><path d="M8.400 10.600l2.800-6.600" stroke="#333" stroke-width="1"/><text x="10.800" y="12.200" font-family="Liberation Sans, sans-serif" font-size="9.500" fill="#222" stroke="#222" stroke-width=".25">f</text></svg>
<span class="t" style="top:403.34px;font:12px/17px 'Liberation Sans',sans-serif;color:#000;left:187px;letter-spacing:-0.212px;">out<span style="position:relative;top:-1px">_</span>5</span>
<svg class="i" style="left:159px;top:422px" width="20" height="14" viewBox="0 0 20 14"><rect x=".5" y=".5" width="19" height="13" fill="#fff" stroke="#383838" stroke-width="1"/><text x="5.300" y="8.600" font-family="Liberation Sans, sans-serif" font-size="9.500" fill="#222" stroke="#222" stroke-width=".25">t</text><path d="M8.400 10.600l2.800-6.600" stroke="#333" stroke-width="1"/><text x="10.800" y="12.200" font-family="Liberation Sans, sans-serif" font-size="9.500" fill="#222" stroke="#222" stroke-width=".25">f</text></svg>
<span class="t" style="top:421.34px;font:12px/17px 'Liberation Sans',sans-serif;color:#000;left:187px;letter-spacing:-0.212px;">out<span style="position:relative;top:-1px">_</span>6</span>
<svg class="i" style="left:159px;top:440px" width="20" height="14" viewBox="0 0 20 14"><rect x=".5" y=".5" width="19" height="13" fill="#fff" stroke="#383838" stroke-width="1"/><text x="5.300" y="8.600" font-family="Liberation Sans, sans-serif" font-size="9.500" fill="#222" stroke="#222" stroke-width=".25">t</text><path d="M8.400 10.600l2.800-6.600" stroke="#333" stroke-width="1"/><text x="10.800" y="12.200" font-family="Liberation Sans, sans-serif" font-size="9.500" fill="#222" stroke="#222" stroke-width=".25">f</text></svg>
<span class="t" style="top:439.34px;font:12px/17px 'Liberation Sans',sans-serif;color:#000;left:187px;letter-spacing:-0.212px;">out<span style="position:relative;top:-1px">_</span>7</span>
<svg class="i" style="left:159px;top:458px" width="20" height="14" viewBox="0 0 20 14"><rect x=".5" y=".5" width="19" height="13" fill="#fff" stroke="#383838" stroke-width="1"/><text x="5.300" y="8.600" font-family="Liberation Sans, sans-serif" font-size="9.500" fill="#222" stroke="#222" stroke-width=".25">t</text><path d="M8.400 10.600l2.800-6.600" stroke="#333" stroke-width="1"/><text x="10.800" y="12.200" font-family="Liberation Sans, sans-serif" font-size="9.500" fill="#222" stroke="#222" stroke-width=".25">f</text></svg>
<span class="t" style="top:457.34px;font:12px/17px 'Liberation Sans',sans-serif;color:#000;left:187px;letter-spacing:-0.212px;">out<span style="position:relative;top:-1px">_</span>8</span>
<svg class="i" style="left:135px;top:493px" width="16" height="16" viewBox="0 0 16 16"><rect x="3.200" y="4.600" width="9.600" height="10.200" fill="none" stroke="#222" stroke-width="1.500"/><path d="M5.800 4.400c0-3.600 4.400-3.600 4.400 0" fill="none" stroke="#222" stroke-width="1.300"/></svg>
<span class="t" style="top:493.34px;font:12px/17px 'Liberation Sans',sans-serif;color:#000;left:160px;transform:scaleX(0.8798);transform-origin:0 0;">Tasks</span>
<div style="left:75px;top:815px;width:63px;height:19px;background:#ffffff;"></div>
<svg class="i" style="left:79px;top:817px" width="16" height="16" viewBox="0 0 16 16"><rect x="0" y="0" width="16" height="16" fill="#cdcdcd"/><g transform="translate(.8 .8) scale(1.050)"><path d="M0 0h14v2.200H0z" fill="#3c3c3c"/><path d="M13.500 2v8.800H10" fill="none" stroke="#3c3c3c"/><rect x="8" y="3" width="5" height="7" fill="#eeeef4"/><path d="M0 4.400h9v9.400H0z" fill="#3c3c3c"/><rect x="1.500" y="6" width="6" height="6.200" fill="#f4f4f8"/><rect x="3.200" y="7.600" width="2.700" height="2.900" fill="#3c3c3c"/><rect x="3.800" y="4.400" width="1.500" height="1.600" fill="#f4f4f8"/><rect x="3.800" y="12.200" width="1.500" height="1.600" fill="#f4f4f8"/><rect x="0" y="8.300" width="1.500" height="1.500" fill="#f4f4f8"/><rect x="7.500" y="8.300" width="1.500" height="1.500" fill="#f4f4f8"/></g></svg>
<span class="t" style="top:817.34px;font:12px/17px 'Liberation Sans',sans-serif;color:#1f8a9c;left:98px;letter-spacing:-0.051px;">Project</span>
<div style="left:140px;top:816px;width:79px;height:18px;background:#dde4e8;"></div>
<svg class="i" style="left:144px;top:817px" width="16" height="16" viewBox="0 0 16 16"><rect x="1.900" y=".6" width="13.500" height="12" fill="#d4d4d4" stroke="#151515" stroke-width="1.200"/><rect x="3.600" y="2.200" width="10.200" height="2.400" fill="#eeeeee"/><path d="M10.400 3.400h.8M12 3.400h.8" stroke="#909090" stroke-width="1"/><rect x=".4" y="4.200" width="12.800" height="7" fill="#fff"/><rect x=".4" y="4.200" width="13.600" height="1.400" fill="#2b8be0"/><path d="M.9 5.600v5.600" stroke="#333" stroke-width="1"/><rect x="4.600" y="7.600" width="9.400" height="7" fill="#fff" stroke="#151515" stroke-width="1.200"/><rect x="4" y="7" width="10.600" height="1.800" fill="#000070"/><rect x="6.800" y="11" width="1.400" height="1.300" fill="#d8a428"/><rect x="9.200" y="11" width="1.400" height="1.300" fill="#d8a428"/></svg>
<span class="t" style="top:817.34px;font:12px/17px 'Liberation Sans',sans-serif;color:#000;left:163.5px;transform:scaleX(0.9240);transform-origin:0 0;">Resources</span>
<div class="ph" style="left:356px;top:163px;width:841px;height:21px;"></div>
<span class="t" style="top:166.34px;font:12px/17px 'Liberation Sans',sans-serif;color:#fff;left:359px;letter-spacing:-0.203px;">Local variables</span>
<div style="left:359px;top:189px;width:792px;height:121px;background:#fffffc;border:1px solid #c9c9c9;"></div>
<div style="left:359px;top:189px;width:791px;height:21px;background:#f0f0f0;border:1px solid #9e9e9e;border-top-color:#c4c4c4;border-left-color:#c4c4c4;"></div>
<div style="left:394px;top:189px;width:1px;height:21px;background:#9e9e9e;"></div>
<div style="left:514px;top:189px;width:1px;height:21px;background:#9e9e9e;"></div>
<div style="left:614px;top:189px;width:1px;height:21px;background:#9e9e9e;"></div>
<div style="left:684px;top:189px;width:1px;height:21px;background:#9e9e9e;"></div>
<div style="left:784px;top:189px;width:1px;height:21px;background:#9e9e9e;"></div>
<div style="left:854px;top:189px;width:1px;height:21px;background:#9e9e9e;"></div>
<div style="left:944px;top:189px;width:1px;height:21px;background:#9e9e9e;"></div>
<span class="t" style="top:192.34px;font:12px/17px 'Liberation Sans',sans-serif;color:#000;left:438px;letter-spacing:0.246px;">Name</span>
<span class="t" style="top:192.34px;font:12px/17px 'Liberation Sans',sans-serif;color:#000;left:551px;letter-spacing:-0.004px;">Type</span>
<span class="t" style="top:192.34px;font:12px/17px 'Liberation Sans',sans-serif;color:#000;left:627px;letter-spacing:0.138px;">Address</span>
<span class="t" style="top:192.34px;font:12px/17px 'Liberation Sans',sans-serif;color:#000;left:720px;letter-spacing:0.066px;">Array</span>
<span class="t" style="top:192.34px;font:12px/17px 'Liberation Sans',sans-serif;color:#000;left:796px;letter-spacing:-0.103px;">Init value</span>
<span class="t" style="top:192.34px;font:12px/17px 'Liberation Sans',sans-serif;color:#000;left:877px;letter-spacing:0.033px;">Attribute</span>
<span class="t" style="top:192.34px;font:12px/17px 'Liberation Sans',sans-serif;color:#000;left:1063px;letter-spacing:0.270px;">Description</span>
<div style="left:359px;top:209px;width:36px;height:21px;background:#f0f0f0;border:1px solid #9e9e9e;border-left-color:#c4c4c4;"></div>
<span class="t" style="top:212.34px;font:12px/17px 'Liberation Sans',sans-serif;color:#000;left:360px;width:34px;text-align:center;">1</span>
<div style="left:395px;top:229px;width:755px;height:1px;background:#d3d8e8;"></div>
<div style="left:514px;top:210px;width:1px;height:20px;background:#d3d8e8;"></div>
<div style="left:614px;top:210px;width:1px;height:20px;background:#d3d8e8;"></div>
<div style="left:684px;top:210px;width:1px;height:20px;background:#d3d8e8;"></div>
<div style="left:784px;top:210px;width:1px;height:20px;background:#d3d8e8;"></div>
<div style="left:854px;top:210px;width:1px;height:20px;background:#d3d8e8;"></div>
<div style="left:944px;top:210px;width:1px;height:20px;background:#d3d8e8;"></div>
<span class="t" style="top:212.34px;font:12px/17px 'Liberation Sans',sans-serif;color:#000;left:397px;">VSTEP</span>
<span class="t" style="top:212.34px;font:12px/17px 'Liberation Sans',sans-serif;color:#000;left:517px;">REAL</span>
<span class="t" style="top:212.34px;font:12px/17px 'Liberation Sans',sans-serif;color:#000;left:617px;">Auto</span>
<span class="t" style="top:212.34px;font:12px/17px 'Liberation Sans',sans-serif;color:#000;left:687px;">No</span>
<span class="t" style="top:212.34px;font:12px/17px 'Liberation Sans',sans-serif;color:#000;left:857px;">..</span>
<div style="left:359px;top:229px;width:36px;height:21px;background:#f0f0f0;border:1px solid #9e9e9e;border-left-color:#c4c4c4;"></div>
<span class="t" style="top:232.34px;font:12px/17px 'Liberation Sans',sans-serif;color:#000;left:360px;width:34px;text-align:center;">2</span>
<div style="left:395px;top:249px;width:755px;height:1px;background:#d3d8e8;"></div>
<div style="left:514px;top:230px;width:1px;height:20px;background:#d3d8e8;"></div>
<div style="left:614px;top:230px;width:1px;height:20px;background:#d3d8e8;"></div>
<div style="left:684px;top:230px;width:1px;height:20px;background:#d3d8e8;"></div>
<div style="left:784px;top:230px;width:1px;height:20px;background:#d3d8e8;"></div>
<div style="left:854px;top:230px;width:1px;height:20px;background:#d3d8e8;"></div>
<div style="left:944px;top:230px;width:1px;height:20px;background:#d3d8e8;"></div>
<span class="t" style="top:232.34px;font:12px/17px 'Liberation Sans',sans-serif;color:#000;left:397px;">VIN</span>
<span class="t" style="top:232.34px;font:12px/17px 'Liberation Sans',sans-serif;color:#000;left:517px;">REAL</span>
<span class="t" style="top:232.34px;font:12px/17px 'Liberation Sans',sans-serif;color:#000;left:617px;">Auto</span>
<span class="t" style="top:232.34px;font:12px/17px 'Liberation Sans',sans-serif;color:#000;left:687px;">No</span>
<span class="t" style="top:232.34px;font:12px/17px 'Liberation Sans',sans-serif;color:#000;left:857px;">..</span>
<div style="left:359px;top:249px;width:36px;height:21px;background:#f0f0f0;border:1px solid #9e9e9e;border-left-color:#c4c4c4;"></div>
<span class="t" style="top:252.34px;font:12px/17px 'Liberation Sans',sans-serif;color:#000;left:360px;width:34px;text-align:center;">3</span>
<div style="left:395px;top:269px;width:755px;height:1px;background:#d3d8e8;"></div>
<div style="left:514px;top:250px;width:1px;height:20px;background:#d3d8e8;"></div>
<div style="left:614px;top:250px;width:1px;height:20px;background:#d3d8e8;"></div>
<div style="left:684px;top:250px;width:1px;height:20px;background:#d3d8e8;"></div>
<div style="left:784px;top:250px;width:1px;height:20px;background:#d3d8e8;"></div>
<div style="left:854px;top:250px;width:1px;height:20px;background:#d3d8e8;"></div>
<div style="left:944px;top:250px;width:1px;height:20px;background:#d3d8e8;"></div>
<span class="t" style="top:252.34px;font:12px/17px 'Liberation Sans',sans-serif;color:#000;left:397px;">VCC</span>
<span class="t" style="top:252.34px;font:12px/17px 'Liberation Sans',sans-serif;color:#000;left:517px;">REAL</span>
<span class="t" style="top:252.34px;font:12px/17px 'Liberation Sans',sans-serif;color:#000;left:617px;">Auto</span>
<span class="t" style="top:252.34px;font:12px/17px 'Liberation Sans',sans-serif;color:#000;left:687px;">No</span>
<span class="t" style="top:252.34px;font:12px/17px 'Liberation Sans',sans-serif;color:#000;left:787px;">12</span>
<span class="t" style="top:252.34px;font:12px/17px 'Liberation Sans',sans-serif;color:#000;left:857px;">CONSTANT</span>
<div style="left:360px;top:293px;width:790px;height:15px;background:#f0f0f0;"></div>
<div style="left:378px;top:293px;width:669px;height:15px;background:#cdcdcd;"></div>
<div style="left:708px;top:297px;width:2px;height:7px;background:#6a6a6a;"></div>
<div style="left:711px;top:297px;width:2px;height:7px;background:#6a6a6a;"></div>
<div style="left:714px;top:297px;width:2px;height:7px;background:#6a6a6a;"></div>
<svg class="i" style="left:364px;top:295.5px" width="10" height="10" viewBox="0 0 10 10"><path d="M6.700 1.500L3.100 5l3.600 3.500" fill="none" stroke="#000" stroke-width="2.200"/></svg>
<svg class="i" style="left:1135px;top:295.5px" width="10" height="10" viewBox="0 0 10 10"><path d="M3.300 1.500L6.900 5 3.300 8.500" fill="none" stroke="#000" stroke-width="2.200"/></svg>
<div style="left:1178px;top:187px;width:19px;height:62px;background:#f4f4f4;border:1px solid #8e8e8e;"></div>
<div style="left:1178px;top:248px;width:19px;height:64px;background:#f4f4f4;border:1px solid #8e8e8e;"></div>
<div style="left:1155px;top:185px;width:23px;height:128px;background:#fcfcfc;border-right:1px solid #6e6e6e;border-bottom:1px solid #b0b0b0;border-top:1px solid #9a9a9a;"></div>
<svg class="i" style="left:1158px;top:192px" width="16" height="16" viewBox="0 0 16 16"><g fill="none" stroke="#3c3c3c" stroke-width="1"><rect x=".5" y=".5" width="14" height="14"/><path d="M5.500 .5v14M9.500 .5v14M.5 5.500h14M.5 9.500h14"/></g></svg>
<svg class="i" style="left:1178px;top:192px" width="16" height="16" viewBox="0 0 16 16"><rect x=".5" y=".5" width="14" height="14" fill="none" stroke="#3c3c3c" stroke-width="1"/><path d="M2.400 3h6.400M2.400 5.500h5M2.400 8h6.400M2.400 10.500h5M2.400 12.500h7.400M10.400 5.500h1.200M10.400 10h1.200" stroke="#3c3c3c" stroke-width="1"/></svg>
<svg class="i" style="left:1178px;top:254px" width="16" height="16" viewBox="0 0 16 16"><g fill="#f4f4f4" stroke="#000" stroke-width="1.500"><rect x=".8" y="8.700" width="5.200" height="3.800" rx=".8"/><rect x="10.200" y="8.700" width="5.800" height="3.800" rx=".8"/></g><path d="M6 9.200h4.200" stroke="#000" stroke-width="1.300"/><path d="M2.200 8.200l1.300-4.600h1.800l.2 4.600M11.800 8.200l1.200-4.600h1.600l1 4.600" fill="none" stroke="#111" stroke-width="1.200"/></svg>
<div style="left:359px;top:322px;width:834px;height:489px;background:#fffffc;border-top:2px solid #6a6a6a;border-left:2px solid #6a6a6a;border-right:1px solid #3a3a3a;border-bottom:1px solid #2a2a2a;"></div>
<div style="left:361px;top:324px;width:815px;height:470px;overflow:hidden">
<div style="left:66px;top:0;width:1px;height:470px;background:#4f68a0"></div>
<span class="t" style="left:25px;top:1px;color:#a2aabc;font:13.4px/16px 'Liberation Mono',monospace;letter-spacing:0.96px;">0001</span>
<span class="t" style="left:67px;top:1px;color:#000;font:13.4px/16px 'Liberation Mono',monospace;letter-spacing:0.96px;">VSTEP := VCC/8;</span>
<span class="t" style="left:25px;top:17px;color:#a2aabc;font:13.4px/16px 'Liberation Mono',monospace;letter-spacing:0.96px;">0002</span>
<span class="t" style="left:25px;top:33px;color:#a2aabc;font:13.4px/16px 'Liberation Mono',monospace;letter-spacing:0.96px;">0003</span>
<span class="t" style="left:67px;top:33px;color:#000;font:13.4px/16px 'Liberation Mono',monospace;letter-spacing:0.96px;">VIN := sensor*1.733E-3;</span>
<span class="t" style="left:25px;top:49px;color:#a2aabc;font:13.4px/16px 'Liberation Mono',monospace;letter-spacing:0.96px;">0004</span>
<span class="t" style="left:25px;top:65px;color:#a2aabc;font:13.4px/16px 'Liberation Mono',monospace;letter-spacing:0.96px;">0005</span>
<span class="t" style="left:67px;top:65px;color:#000;font:13.4px/16px 'Liberation Mono',monospace;letter-spacing:0.96px;"><span style="color:#0000f0">IF</span>  VIN &gt;= VSTEP*1 <span style="color:#0000f0">THEN</span></span>
<span class="t" style="left:25px;top:81px;color:#a2aabc;font:13.4px/16px 'Liberation Mono',monospace;letter-spacing:0.96px;">0006</span>
<span class="t" style="left:67px;top:81px;color:#000;font:13.4px/16px 'Liberation Mono',monospace;letter-spacing:0.96px;">    out_1 := TRUE;</span>
<span class="t" style="left:25px;top:97px;color:#a2aabc;font:13.4px/16px 'Liberation Mono',monospace;letter-spacing:0.96px;">0007</span>
<span class="t" style="left:67px;top:97px;color:#000;font:13.4px/16px 'Liberation Mono',monospace;letter-spacing:0.96px;"><span style="color:#0000f0">ELSE</span></span>
<span class="t" style="left:25px;top:113px;color:#a2aabc;font:13.4px/16px 'Liberation Mono',monospace;letter-spacing:0.96px;">0008</span>
<span class="t" style="left:67px;top:113px;color:#000;font:13.4px/16px 'Liberation Mono',monospace;letter-spacing:0.96px;">    out_1 := FALSE;</span>
<span class="t" style="left:25px;top:129px;color:#a2aabc;font:13.4px/16px 'Liberation Mono',monospace;letter-spacing:0.96px;">0009</span>
<span class="t" style="left:67px;top:129px;color:#000;font:13.4px/16px 'Liberation Mono',monospace;letter-spacing:0.96px;"><span style="color:#0000f0">END_IF</span>;</span>
<span class="t" style="left:25px;top:145px;color:#a2aabc;font:13.4px/16px 'Liberation Mono',monospace;letter-spacing:0.96px;">0010</span>
<span class="t" style="left:25px;top:161px;color:#a2aabc;font:13.4px/16px 'Liberation Mono',monospace;letter-spacing:0.96px;">0011</span>
<span class="t" style="left:67px;top:161px;color:#000;font:13.4px/16px 'Liberation Mono',monospace;letter-spacing:0.96px;"><span style="color:#0000f0">IF</span> VIN &gt;= VSTEP*2 <span style="color:#0000f0">THEN</span></span>
<span class="t" style="left:25px;top:177px;color:#a2aabc;font:13.4px/16px 'Liberation Mono',monospace;letter-spacing:0.96px;">0012</span>
<span class="t" style="left:67px;top:177px;color:#000;font:13.4px/16px 'Liberation Mono',monospace;letter-spacing:0.96px;">    out_2 := TRUE;</span>
<span class="t" style="left:25px;top:193px;color:#a2aabc;font:13.4px/16px 'Liberation Mono',monospace;letter-spacing:0.96px;">0013</span>
<span class="t" style="left:67px;top:193px;color:#000;font:13.4px/16px 'Liberation Mono',monospace;letter-spacing:0.96px;"><span style="color:#0000f0">ELSE</span></span>
<span class="t" style="left:25px;top:209px;color:#a2aabc;font:13.4px/16px 'Liberation Mono',monospace;letter-spacing:0.96px;">0014</span>
<span class="t" style="left:67px;top:209px;color:#000;font:13.4px/16px 'Liberation Mono',monospace;letter-spacing:0.96px;">    out_2 := FALSE;</span>
<span class="t" style="left:25px;top:225px;color:#a2aabc;font:13.4px/16px 'Liberation Mono',monospace;letter-spacing:0.96px;">0015</span>
<span class="t" style="left:67px;top:225px;color:#000;font:13.4px/16px 'Liberation Mono',monospace;letter-spacing:0.96px;"><span style="color:#0000f0">END_IF</span>;</span>
<span class="t" style="left:25px;top:241px;color:#a2aabc;font:13.4px/16px 'Liberation Mono',monospace;letter-spacing:0.96px;">0016</span>
<span class="t" style="left:25px;top:257px;color:#a2aabc;font:13.4px/16px 'Liberation Mono',monospace;letter-spacing:0.96px;">0017</span>
<span class="t" style="left:67px;top:257px;color:#000;font:13.4px/16px 'Liberation Mono',monospace;letter-spacing:0.96px;"><span style="color:#0000f0">IF</span> VIN &gt;= VSTEP*3 <span style="color:#0000f0">THEN</span></span>
<span class="t" style="left:25px;top:273px;color:#a2aabc;font:13.4px/16px 'Liberation Mono',monospace;letter-spacing:0.96px;">0018</span>
<span class="t" style="left:67px;top:273px;color:#000;font:13.4px/16px 'Liberation Mono',monospace;letter-spacing:0.96px;">    out_3 := TRUE;</span>
<span class="t" style="left:25px;top:289px;color:#a2aabc;font:13.4px/16px 'Liberation Mono',monospace;letter-spacing:0.96px;">0019</span>
<span class="t" style="left:67px;top:289px;color:#000;font:13.4px/16px 'Liberation Mono',monospace;letter-spacing:0.96px;"><span style="color:#0000f0">ELSE</span></span>
<span class="t" style="left:25px;top:305px;color:#a2aabc;font:13.4px/16px 'Liberation Mono',monospace;letter-spacing:0.96px;">0020</span>
<span class="t" style="left:67px;top:305px;color:#000;font:13.4px/16px 'Liberation Mono',monospace;letter-spacing:0.96px;">    out_3 := FALSE;</span>
<span class="t" style="left:25px;top:321px;color:#a2aabc;font:13.4px/16px 'Liberation Mono',monospace;letter-spacing:0.96px;">0021</span>
<span class="t" style="left:67px;top:321px;color:#000;font:13.4px/16px 'Liberation Mono',monospace;letter-spacing:0.96px;"><span style="color:#0000f0">END_IF</span>;</span>
<span class="t" style="left:25px;top:337px;color:#a2aabc;font:13.4px/16px 'Liberation Mono',monospace;letter-spacing:0.96px;">0022</span>
<span class="t" style="left:25px;top:353px;color:#a2aabc;font:13.4px/16px 'Liberation Mono',monospace;letter-spacing:0.96px;">0023</span>
<span class="t" style="left:67px;top:353px;color:#000;font:13.4px/16px 'Liberation Mono',monospace;letter-spacing:0.96px;"><span style="color:#0000f0">IF</span> VIN &gt;= VSTEP*4 <span style="color:#0000f0">THEN</span></span>
<span class="t" style="left:25px;top:369px;color:#a2aabc;font:13.4px/16px 'Liberation Mono',monospace;letter-spacing:0.96px;">0024</span>
<span class="t" style="left:67px;top:369px;color:#000;font:13.4px/16px 'Liberation Mono',monospace;letter-spacing:0.96px;">    out_4 := TRUE;</span>
<span class="t" style="left:25px;top:385px;color:#a2aabc;font:13.4px/16px 'Liberation Mono',monospace;letter-spacing:0.96px;">0025</span>
<span class="t" style="left:67px;top:385px;color:#000;font:13.4px/16px 'Liberation Mono',monospace;letter-spacing:0.96px;"><span style="color:#0000f0">ELSE</span></span>
<span class="t" style="left:25px;top:401px;color:#a2aabc;font:13.4px/16px 'Liberation Mono',monospace;letter-spacing:0.96px;">0026</span>
<span class="t" style="left:67px;top:401px;color:#000;font:13.4px/16px 'Liberation Mono',monospace;letter-spacing:0.96px;">    out_4 := FALSE;</span>
<span class="t" style="left:25px;top:417px;color:#a2aabc;font:13.4px/16px 'Liberation Mono',monospace;letter-spacing:0.96px;">0027</span>
<span class="t" style="left:67px;top:417px;color:#000;font:13.4px/16px 'Liberation Mono',monospace;letter-spacing:0.96px;"><span style="color:#0000f0">END_IF</span>;</span>
<span class="t" style="left:25px;top:433px;color:#a2aabc;font:13.4px/16px 'Liberation Mono',monospace;letter-spacing:0.96px;">0028</span>
<span class="t" style="left:25px;top:449px;color:#a2aabc;font:13.4px/16px 'Liberation Mono',monospace;letter-spacing:0.96px;">0029</span>
<span class="t" style="left:67px;top:449px;color:#000;font:13.4px/16px 'Liberation Mono',monospace;letter-spacing:0.96px;"><span style="color:#0000f0">IF</span> VIN &gt;= VSTEP*5 <span style="color:#0000f0">THEN</span></span>
<span class="t" style="left:25px;top:465px;color:#a2aabc;font:13.4px/16px 'Liberation Mono',monospace;letter-spacing:0.96px;">0030</span>
<span class="t" style="left:67px;top:465px;color:#000;font:13.4px/16px 'Liberation Mono',monospace;letter-spacing:0.96px;">    out_5 := TRUE;</span>
</div>
<div style="left:1176px;top:324px;width:15px;height:469px;background:#f0f0f0;"></div>
<div style="left:1176px;top:342px;width:15px;height:240px;background:#cdcdcd;"></div>
<div style="left:1180px;top:458px;width:7px;height:2px;background:#6a6a6a;"></div>
<div style="left:1180px;top:461px;width:7px;height:2px;background:#6a6a6a;"></div>
<div style="left:1180px;top:464px;width:7px;height:2px;background:#6a6a6a;"></div>
<svg class="i" style="left:1178.5px;top:328px" width="10" height="10" viewBox="0 0 10 10"><path d="M1.500 6.800L5 3.200l3.500 3.600" fill="none" stroke="#000" stroke-width="2.200"/></svg>
<svg class="i" style="left:1178.5px;top:779px" width="10" height="10" viewBox="0 0 10 10"><path d="M1.500 3.200L5 6.800l3.500-3.600" fill="none" stroke="#000" stroke-width="2.200"/></svg>
<div style="left:361px;top:794px;width:815px;height:15px;background:#f0f0f0;"></div>
<svg class="i" style="left:365px;top:796.5px" width="10" height="10" viewBox="0 0 10 10"><path d="M6.700 1.500L3.100 5l3.600 3.500" fill="none" stroke="#000" stroke-width="2.200"/></svg>
<svg class="i" style="left:1161px;top:796.5px" width="10" height="10" viewBox="0 0 10 10"><path d="M3.300 1.500L6.900 5 3.300 8.500" fill="none" stroke="#000" stroke-width="2.200"/></svg>
<div style="left:1176px;top:793px;width:15px;height:16px;background:#f0f0f0;"></div>
<div style="left:358px;top:816px;width:79px;height:18px;background:#dde4e8;"></div>
<svg class="i" style="left:362px;top:817px" width="16" height="16" viewBox="0 0 16 16"><path d="M2 2.200l6.600 6" stroke="#0a56b0" stroke-width="2.600"/><path d="M8 7.400l2 2.200-2.800-.6z" fill="#e8e8f0" stroke="#0a56b0" stroke-width=".6"/><path d="M1.200 1.200l1.200 1.200" stroke="#4a90e0" stroke-width="1.600"/><rect x="9.300" y="6.200" width="5" height="5" fill="#f4f4f4" stroke="#3c3c3c" stroke-width="1.100"/><rect x="8.800" y="5.600" width="6" height="1.600" fill="#3c3c3c"/><rect x="6" y="9.600" width="6.200" height="4.600" fill="#f4f4f4" stroke="#3c3c3c" stroke-width="1.100"/><rect x="5.500" y="9" width="7.200" height="1.500" fill="#3c3c3c"/></svg>
<span class="t" style="top:817.34px;font:12px/17px 'Liberation Sans',sans-serif;color:#000;left:381px;transform:scaleX(0.9240);transform-origin:0 0;">Resources</span>
<div style="left:439px;top:815px;width:54px;height:19px;background:#ffffff;"></div>
<svg class="i" style="left:443px;top:817px" width="16" height="16" viewBox="0 0 16 16"><g shape-rendering="crispEdges"><rect x="1" y="1" width="14" height="14" fill="#111"/><rect x="2" y="3" width="12" height="11" fill="#fff"/><rect x="1" y="1" width="14" height="2" fill="#000080"/><rect x="3" y="4" width="3" height="1" fill="#909090"/><rect x="8" y="4" width="3" height="1" fill="#00a000"/><rect x="6" y="6" width="3" height="1" fill="#0000ff"/><rect x="6" y="8" width="2" height="1" fill="#909090"/><rect x="9" y="8" width="1" height="1" fill="#00a000"/><rect x="11" y="8" width="1" height="1" fill="#909090"/><rect x="6" y="10" width="2" height="1" fill="#00a000"/><rect x="9" y="10" width="3" height="1" fill="#0000ff"/><rect x="3" y="12" width="3" height="1" fill="#909090"/></g></svg>
<span class="t" style="top:817.34px;font:12px/17px 'Liberation Sans',sans-serif;color:#1f8a9c;left:462px;letter-spacing:-0.004px;">main</span>
<svg class="i" style="left:1142px;top:818px" width="56" height="14" viewBox="0 0 56 14"><path d="M8.500 2.500v8l-4.600-4z" fill="none" stroke="#9a9a9a" stroke-width="1"/><path d="M18.500 2.500v8l4.600-4z" fill="none" stroke="#9a9a9a" stroke-width="1"/><path d="M29 5.500h8.400l-4.200 4z" fill="#666"/><path d="M43.600 1.800l8.800 9.200M52.400 1.800l-8.800 9.200" stroke="#444" stroke-width="1.300"/></svg>
<div class="ph" style="left:1203px;top:163px;width:217px;height:21px;"></div>
<span class="t" style="top:166.34px;font:12px/17px 'Liberation Sans',sans-serif;color:#fff;left:1206px;letter-spacing:-0.113px;">Watch</span>
<svg class="i" style="left:1389px;top:168px" width="28" height="11" viewBox="0 0 28 11"><path d="M2.800 .6h3.600M2.800 .6v5.200" fill="none" stroke="#fff" stroke-width="1.300"/><rect x="5" y="0" width="2.200" height="5.800" fill="#fff"/><rect x=".6" y="5.400" width="8" height="1.600" fill="#fff"/><rect x="3.800" y="6.800" width="1.600" height="3.600" fill="#fff"/><path d="M18.400 1.200l6.600 6.400M25 1.200l-6.600 6.400" stroke="#fff" stroke-width="1.700"/></svg>
<svg class="i" style="left:1207px;top:190px" width="16" height="16" viewBox="0 0 16 16"><rect x="1.500" y="1.500" width="13" height="12" fill="none" stroke="#808080" stroke-width="1"/><rect x="1" y="1" width="14" height="2.300" fill="#8a8a8a"/><g fill="none" stroke="#808080" stroke-width="1"><rect x="7.500" y="5.500" width="5" height="2"/><rect x="7.500" y="9.500" width="5" height="2"/></g><path d="M3.400 6.500h2.600M3.400 10.500h2.600" stroke="#808080" stroke-width="1"/></svg>
<svg class="i" style="left:1235px;top:190px" width="16" height="16" viewBox="0 0 16 16"><path d="M5 8V5.200a4 4 0 0 1 8 0V7" fill="none" stroke="#3c3c3c" stroke-width="1.700"/><path d="M5.400 7.600L1.400 12" stroke="#3c3c3c" stroke-width="2.600"/><circle cx="10.200" cy="10.200" r="5.100" fill="#e60f0f"/><rect x="8.400" y="8.400" width="3.600" height="3.600" fill="#fff"/></svg>
<svg class="i" style="left:1263px;top:190px" width="16" height="16" viewBox="0 0 16 16"><path d="M3.900 2.200v5.800M1 5.100h5.800" stroke="#2a8c2a" stroke-width="1.700"/><path d="M5.400 9.400l5.200-3 4.200 2.400v3.800l-4.800 2.600-4.600-2.600z" fill="#3c3c3c"/><path d="M6.600 9.400l4-2.300 3 1.700-4 2.100z" fill="#e8e8e8"/></svg>
<svg class="i" style="left:1290px;top:190px" width="16" height="16" viewBox="0 0 16 16"><path d="M1 1h14v2.200H1z" fill="#3c3c3c"/><path d="M1.500 3v4M14.500 3v9.500H9" fill="none" stroke="#3c3c3c"/><path d="M1 7h6.400l1.400 1.400V14.600H1z" fill="#0a4fa0"/><rect x="2.800" y="7" width="3.400" height="2.400" fill="#f4f4f4"/><rect x="2.600" y="11.400" width="4.600" height="3.200" fill="#f4f4f4"/><rect x="2.600" y="11.400" width="4.600" height="3.200" fill="#0a4fa0" opacity=".85"/></svg>
<svg class="i" style="left:1312px;top:190px" width="16" height="16" viewBox="0 0 16 16"><path d="M1 1h14v2.200H1z" fill="#3c3c3c"/><path d="M1.500 3v4M14.500 3v9.500H9" fill="none" stroke="#3c3c3c"/><path d="M1.600 8v2.400c0 1.400.7 2 2 2h2.600" fill="none" stroke="#0a4fa0" stroke-width="1.500"/><path d="M5 9.600l3 2.800-3 2.800" fill="none" stroke="#0a4fa0" stroke-width="1.500"/></svg>
<svg class="i" style="left:1334px;top:190px" width="16" height="16" viewBox="0 0 16 16"><path d="M1 2.400h8v2.200H1z" fill="#3c3c3c"/><path d="M1.500 4v4M14.500 7v6.500H9" fill="none" stroke="#3c3c3c"/><path d="M1.600 8.600V11c0 1.400.7 2 2 2h2.600" fill="none" stroke="#0a4fa0" stroke-width="1.500"/><path d="M5 10.200l3 2.800-3 2.800" fill="none" stroke="#0a4fa0" stroke-width="1.500"/><rect x="9" y="1.400" width="6.600" height="5.600" fill="#222"/><path d="M12.300 .2v6.800M9 3.600h6.600" stroke="#18c018" stroke-width="2"/></svg>
<svg class="i" style="left:1362px;top:190px" width="16" height="16" viewBox="0 0 16 16"><path d="M13.600 1.600L8.600 6.800" stroke="#3c3c3c" stroke-width="2"/><path d="M6.200 5.600l5.200 5-3.200 3.400-5.600-5.400z" fill="#3c3c3c"/></svg>
<div style="left:1228px;top:187px;width:1px;height:22px;background:#c4c4c4;"></div>
<div style="left:1256px;top:187px;width:1px;height:22px;background:#c4c4c4;"></div>
<div style="left:1284px;top:187px;width:1px;height:22px;background:#c4c4c4;"></div>
<div style="left:1356px;top:187px;width:1px;height:22px;background:#c4c4c4;"></div>
<div style="left:1202px;top:211px;width:219px;height:626px;background:#fffffc;border:1px solid #c9c9c9;"></div>
<span class="t" style="top:215.34px;font:12px/17px 'Liberation Sans',sans-serif;color:#000;left:1208px;letter-spacing:-0.003px;">Symbol</span>
<span class="t" style="top:215.34px;font:12px/17px 'Liberation Sans',sans-serif;color:#000;left:1348px;letter-spacing:-0.163px;">Value</span>
<div style="left:1341px;top:212px;width:1px;height:23px;background:#e2e2e2;"></div>
<svg class="i" style="left:1221px;top:240px" width="15" height="8" viewBox="0 0 15 8"><path d="M.4 7.600L7.400.4l7 7.200z" fill="#000"/></svg>
<span class="t" style="top:237.34px;font:12px/17px 'Liberation Sans',sans-serif;color:#000;left:1240px;transform:scaleX(0.9493);transform-origin:0 0;">VIN</span>
<span class="t" style="top:237.34px;font:12px/17px 'Liberation Sans',sans-serif;color:#000;left:1348px;transform:scaleX(0.8991);transform-origin:0 0;">1.934</span>
<div style="left:1222px;top:262px;width:14px;height:6px;background:#0000f0;"></div>
<span class="t" style="top:256.34px;font:12px/17px 'Liberation Sans',sans-serif;color:#000;left:1240px;letter-spacing:-0.212px;">out<span style="position:relative;top:-1px">_</span>1</span>
<span class="t" style="top:256.34px;font:12px/17px 'Liberation Sans',sans-serif;color:#000;left:1348px;transform:scaleX(0.8264);transform-origin:0 0;">TRUE</span>
<div style="left:1222px;top:281px;width:14px;height:6px;background:#bccdd4;"></div>
<span class="t" style="top:275.34px;font:12px/17px 'Liberation Sans',sans-serif;color:#000;left:1240px;letter-spacing:-0.212px;">out<span style="position:relative;top:-1px">_</span>2</span>
<span class="t" style="top:275.34px;font:12px/17px 'Liberation Sans',sans-serif;color:#000;left:1348px;transform:scaleX(0.8164);transform-origin:0 0;">FALSE</span>
<div style="left:1222px;top:300px;width:14px;height:6px;background:#bccdd4;"></div>
<span class="t" style="top:294.34px;font:12px/17px 'Liberation Sans',sans-serif;color:#000;left:1240px;letter-spacing:-0.212px;">out<span style="position:relative;top:-1px">_</span>3</span>
<span class="t" style="top:294.34px;font:12px/17px 'Liberation Sans',sans-serif;color:#000;left:1348px;transform:scaleX(0.8164);transform-origin:0 0;">FALSE</span>
<div style="left:1222px;top:319px;width:14px;height:6px;background:#bccdd4;"></div>
<span class="t" style="top:313.34px;font:12px/17px 'Liberation Sans',sans-serif;color:#000;left:1240px;letter-spacing:-0.212px;">out<span style="position:relative;top:-1px">_</span>4</span>
<span class="t" style="top:313.34px;font:12px/17px 'Liberation Sans',sans-serif;color:#000;left:1348px;transform:scaleX(0.8164);transform-origin:0 0;">FALSE</span>
<div style="left:1222px;top:338px;width:14px;height:6px;background:#bccdd4;"></div>
<span class="t" style="top:332.34px;font:12px/17px 'Liberation Sans',sans-serif;color:#000;left:1240px;letter-spacing:-0.212px;">out<span style="position:relative;top:-1px">_</span>5</span>
<span class="t" style="top:332.34px;font:12px/17px 'Liberation Sans',sans-serif;color:#000;left:1348px;transform:scaleX(0.8164);transform-origin:0 0;">FALSE</span>
<div style="left:1222px;top:357px;width:14px;height:6px;background:#bccdd4;"></div>
<span class="t" style="top:351.34px;font:12px/17px 'Liberation Sans',sans-serif;color:#000;left:1240px;letter-spacing:-0.212px;">out<span style="position:relative;top:-1px">_</span>6</span>
<span class="t" style="top:351.34px;font:12px/17px 'Liberation Sans',sans-serif;color:#000;left:1348px;transform:scaleX(0.8164);transform-origin:0 0;">FALSE</span>
<div style="left:1222px;top:376px;width:14px;height:6px;background:#bccdd4;"></div>
<span class="t" style="top:370.34px;font:12px/17px 'Liberation Sans',sans-serif;color:#000;left:1240px;letter-spacing:-0.212px;">out<span style="position:relative;top:-1px">_</span>7</span>
<span class="t" style="top:370.34px;font:12px/17px 'Liberation Sans',sans-serif;color:#000;left:1348px;transform:scaleX(0.8164);transform-origin:0 0;">FALSE</span>
<div style="left:1222px;top:395px;width:14px;height:6px;background:#bccdd4;"></div>
<span class="t" style="top:389.34px;font:12px/17px 'Liberation Sans',sans-serif;color:#000;left:1240px;letter-spacing:-0.212px;">out<span style="position:relative;top:-1px">_</span>8</span>
<span class="t" style="top:389.34px;font:12px/17px 'Liberation Sans',sans-serif;color:#000;left:1348px;transform:scaleX(0.8164);transform-origin:0 0;">FALSE</span>
<div style="left:1203px;top:819px;width:217px;height:15px;background:#f0f0f0;"></div>
<div style="left:1220px;top:819px;width:57px;height:15px;background:#cdcdcd;"></div>
<div style="left:1244px;top:823px;width:2px;height:7px;background:#6a6a6a;"></div>
<div style="left:1247px;top:823px;width:2px;height:7px;background:#6a6a6a;"></div>
<div style="left:1250px;top:823px;width:2px;height:7px;background:#6a6a6a;"></div>
<svg class="i" style="left:1207px;top:821.5px" width="10" height="10" viewBox="0 0 10 10"><path d="M6.700 1.500L3.100 5l3.600 3.500" fill="none" stroke="#000" stroke-width="2.200"/></svg>
<svg class="i" style="left:1405px;top:821.5px" width="10" height="10" viewBox="0 0 10 10"><path d="M3.300 1.500L6.900 5 3.300 8.500" fill="none" stroke="#000" stroke-width="2.200"/></svg>
<div class="ph" style="left:1426px;top:163px;width:169px;height:21px;"></div>
<span class="t" style="top:166.34px;font:12px/17px 'Liberation Sans',sans-serif;color:#fff;left:1429px;letter-spacing:-0.253px;">Library Tree</span>
<svg class="i" style="left:1564px;top:168px" width="28" height="11" viewBox="0 0 28 11"><path d="M2.800 .6h3.600M2.800 .6v5.200" fill="none" stroke="#fff" stroke-width="1.300"/><rect x="5" y="0" width="2.200" height="5.800" fill="#fff"/><rect x=".6" y="5.400" width="8" height="1.600" fill="#fff"/><rect x="3.800" y="6.800" width="1.600" height="3.600" fill="#fff"/><path d="M18.400 1.200l6.600 6.400M25 1.200l-6.600 6.400" stroke="#fff" stroke-width="1.700"/></svg>
<svg class="i" style="left:1430px;top:190px" width="16" height="16" viewBox="0 0 16 16"><rect x="6.200" y="1.200" width="3.500" height="11.400" fill="#3c3c3c"/><rect x="11.200" y="2.200" width="3.800" height="10.400" fill="#3c3c3c"/><g fill="#f4f4f4"><rect x="7.100" y="2.800" width="1.700" height="1.300"/><rect x="12.300" y="3.600" width="1.700" height="1.300"/><rect x="7.100" y="8.900" width="1.700" height="1.100"/><rect x="12.300" y="8.900" width="1.700" height="1.100"/><rect x="7.100" y="10.900" width="1.700" height="1.100"/><rect x="12.300" y="10.900" width="1.700" height="1.100"/></g><path d="M2 2.800l3 2.200-3 2.200z" fill="#000088"/><path d="M5 8.600L2 10.800 5 13z" fill="#000088"/></svg>
<svg class="i" style="left:1452px;top:190px" width="16" height="16" viewBox="0 0 16 16"><rect x="6.200" y="1.200" width="3.500" height="11.400" fill="#3c3c3c"/><rect x="11.200" y="2.200" width="3.800" height="10.400" fill="#3c3c3c"/><g fill="#f4f4f4"><rect x="7.100" y="2.800" width="1.700" height="1.300"/><rect x="12.300" y="3.600" width="1.700" height="1.300"/><rect x="7.100" y="8.900" width="1.700" height="1.100"/><rect x="12.300" y="8.900" width="1.700" height="1.100"/><rect x="7.100" y="10.900" width="1.700" height="1.100"/><rect x="12.300" y="10.900" width="1.700" height="1.100"/></g><g fill="none" stroke="#0a940a" stroke-width="1.700"><path d="M.9 10.400a2.800 2.800 0 0 1 4.600-2"/><path d="M6.300 11.600a2.800 2.800 0 0 1-4.600 2"/></g><path d="M3.600 6.200l2.800 1.600-2.200 2z" fill="#0a940a"/><path d="M3.600 15.800L.8 14.200l2.200-2z" fill="#0a940a"/></svg>
<div style="left:1425px;top:211px;width:171px;height:626px;background:#fffffc;border:1px solid #c9c9c9;"></div>
<div style="left:1426px;top:212px;width:169px;height:606px;overflow:hidden">
<div style="left:43px;top:18px;width:1px;height:100px;background:repeating-linear-gradient(180deg,#a8a8a8 0 1px,transparent 1px 2px);"></div>
<div style="left:22px;top:9px;width:8px;height:1px;background:repeating-linear-gradient(90deg,#a8a8a8 0 1px,transparent 1px 2px);"></div>
<div style="left:12px;top:5px;width:9px;height:9px;background:#fff;border:1px solid #9a9a9a;"></div>
<div style="left:14px;top:9px;width:5px;height:1px;background:#000;"></div>
<svg class="i" style="left:34px;top:2px" width="16" height="16" viewBox="0 0 16 16"><rect x="1" y="1.600" width="3.800" height="11" fill="#3c3c3c"/><rect x="6" y=".8" width="3.800" height="11.800" fill="#3c3c3c"/><rect x="11" y="1.600" width="3.800" height="11" fill="#3c3c3c"/><g fill="#fff"><rect x="2" y="3" width="1.800" height="1.200"/><rect x="7" y="2.200" width="1.800" height="1.200"/><rect x="12" y="3" width="1.800" height="1.200"/><rect x="2" y="8.400" width="1.800" height="1.200"/><rect x="7" y="8.400" width="1.800" height="1.200"/><rect x="12" y="8.400" width="1.800" height="1.200"/><rect x="2" y="10.600" width="1.800" height="1"/><rect x="7" y="10.600" width="1.800" height="1"/><rect x="12" y="10.600" width="1.800" height="1"/></g></svg>
<span class="t" style="top:1.34px;font:12px/17px 'Liberation Sans',sans-serif;color:#000;left:60px;letter-spacing:-0.100px;">Project libraries</span>
<div style="left:49px;top:27px;width:8px;height:1px;background:repeating-linear-gradient(90deg,#a8a8a8 0 1px,transparent 1px 2px);"></div>
<div style="left:39px;top:23px;width:9px;height:9px;background:#fff;border:1px solid #9a9a9a;"></div>
<div style="left:41px;top:27px;width:5px;height:1px;background:#000;"></div>
<div style="left:43px;top:25px;width:1px;height:5px;background:#000;"></div>
<svg class="i" style="left:56px;top:18px" width="26" height="18" viewBox="0 0 26 18"><path d="M11 4.200L15.600 .9H24.100V11.600H11z" fill="#1c8ee6"/><path d="M15.800 2.300h7.400" stroke="#7cc0f4" stroke-width="1"/><rect x="1.100" y="5.100" width="3.800" height="11.200" fill="#3a3a3a"/><rect x="6.300" y="5.100" width="3.800" height="11.200" fill="#3a3a3a"/><rect x="11.400" y="11.600" width="3.800" height="4.700" fill="#3a3a3a"/><g fill="#fff"><rect x="2.100" y="6.600" width="1.800" height="1.400"/><rect x="7.300" y="6.600" width="1.800" height="1.400"/><rect x="2.100" y="12" width="1.800" height="1.200"/><rect x="7.300" y="12" width="1.800" height="1.200"/><rect x="12.400" y="12.600" width="1.800" height="1"/><rect x="2.100" y="14.200" width="1.800" height="1"/><rect x="7.300" y="14.200" width="1.800" height="1"/><rect x="12.400" y="14.400" width="1.800" height="1"/></g></svg>
<span class="t" style="top:19.34px;font:12px/17px 'Liberation Sans',sans-serif;color:#000;left:87px;transform:scaleX(0.9370);transform-origin:0 0;">Operators and </span>
<span class="t" style="top:19.34px;font:12px/17px 'Liberation Sans',sans-serif;color:#000;left:162px;">blocks</span>
<div style="left:49px;top:45px;width:8px;height:1px;background:repeating-linear-gradient(90deg,#a8a8a8 0 1px,transparent 1px 2px);"></div>
<div style="left:39px;top:41px;width:9px;height:9px;background:#fff;border:1px solid #9a9a9a;"></div>
<div style="left:41px;top:45px;width:5px;height:1px;background:#000;"></div>
<div style="left:43px;top:43px;width:1px;height:5px;background:#000;"></div>
<svg class="i" style="left:56px;top:36px" width="26" height="18" viewBox="0 0 26 18"><path d="M11 4.200L15.600 .9H24.100V11.600H11z" fill="#1c8ee6"/><path d="M15.800 2.300h7.400" stroke="#7cc0f4" stroke-width="1"/><rect x="1.100" y="5.100" width="3.800" height="11.200" fill="#3a3a3a"/><rect x="6.300" y="5.100" width="3.800" height="11.200" fill="#3a3a3a"/><rect x="11.400" y="11.600" width="3.800" height="4.700" fill="#3a3a3a"/><g fill="#fff"><rect x="2.100" y="6.600" width="1.800" height="1.400"/><rect x="7.300" y="6.600" width="1.800" height="1.400"/><rect x="2.100" y="12" width="1.800" height="1.200"/><rect x="7.300" y="12" width="1.800" height="1.200"/><rect x="12.400" y="12.600" width="1.800" height="1"/><rect x="2.100" y="14.200" width="1.800" height="1"/><rect x="7.300" y="14.200" width="1.800" height="1"/><rect x="12.400" y="14.400" width="1.800" height="1"/></g></svg>
<span class="t" style="top:37.34px;font:12px/17px 'Liberation Sans',sans-serif;color:#000;left:87px;letter-spacing:-0.227px;">Target</span>
<div style="left:49px;top:63px;width:8px;height:1px;background:repeating-linear-gradient(90deg,#a8a8a8 0 1px,transparent 1px 2px);"></div>
<div style="left:39px;top:59px;width:9px;height:9px;background:#fff;border:1px solid #9a9a9a;"></div>
<div style="left:41px;top:63px;width:5px;height:1px;background:#000;"></div>
<div style="left:43px;top:61px;width:1px;height:5px;background:#000;"></div>
<svg class="i" style="left:56px;top:54px" width="26" height="18" viewBox="0 0 26 18"><path d="M11 4.200L15.600 .9H24.100V11.600H11z" fill="#c2c2c2"/><path d="M15.800 2.300h7.400" stroke="#dedede" stroke-width="1"/><rect x="1.100" y="5.100" width="3.800" height="11.200" fill="#3a3a3a"/><rect x="6.300" y="5.100" width="3.800" height="11.200" fill="#3a3a3a"/><rect x="11.400" y="11.600" width="3.800" height="4.700" fill="#3a3a3a"/><g fill="#fff"><rect x="2.100" y="6.600" width="1.800" height="1.400"/><rect x="7.300" y="6.600" width="1.800" height="1.400"/><rect x="2.100" y="12" width="1.800" height="1.200"/><rect x="7.300" y="12" width="1.800" height="1.200"/><rect x="12.400" y="12.600" width="1.800" height="1"/><rect x="2.100" y="14.200" width="1.800" height="1"/><rect x="7.300" y="14.200" width="1.800" height="1"/><rect x="12.400" y="14.400" width="1.800" height="1"/></g></svg>
<span class="t" style="top:55.34px;font:12px/17px 'Liberation Sans',sans-serif;color:#000;left:87px;transform:scaleX(0.9407);transform-origin:0 0;">AIDatabase</span>
<div style="left:49px;top:81px;width:8px;height:1px;background:repeating-linear-gradient(90deg,#a8a8a8 0 1px,transparent 1px 2px);"></div>
<div style="left:39px;top:77px;width:9px;height:9px;background:#fff;border:1px solid #9a9a9a;"></div>
<div style="left:41px;top:81px;width:5px;height:1px;background:#000;"></div>
<div style="left:43px;top:79px;width:1px;height:5px;background:#000;"></div>
<svg class="i" style="left:56px;top:72px" width="26" height="18" viewBox="0 0 26 18"><path d="M11 4.200L15.600 .9H24.100V11.600H11z" fill="#c2c2c2"/><path d="M15.800 2.300h7.400" stroke="#dedede" stroke-width="1"/><rect x="1.100" y="5.100" width="3.800" height="11.200" fill="#3a3a3a"/><rect x="6.300" y="5.100" width="3.800" height="11.200" fill="#3a3a3a"/><rect x="11.400" y="11.600" width="3.800" height="4.700" fill="#3a3a3a"/><g fill="#fff"><rect x="2.100" y="6.600" width="1.800" height="1.400"/><rect x="7.300" y="6.600" width="1.800" height="1.400"/><rect x="2.100" y="12" width="1.800" height="1.200"/><rect x="7.300" y="12" width="1.800" height="1.200"/><rect x="12.400" y="12.600" width="1.800" height="1"/><rect x="2.100" y="14.200" width="1.800" height="1"/><rect x="7.300" y="14.200" width="1.800" height="1"/><rect x="12.400" y="14.400" width="1.800" height="1"/></g></svg>
<span class="t" style="top:73.34px;font:12px/17px 'Liberation Sans',sans-serif;color:#000;left:87px;letter-spacing:-0.317px;">AIModbusRTU</span>
<div style="left:49px;top:99px;width:8px;height:1px;background:repeating-linear-gradient(90deg,#a8a8a8 0 1px,transparent 1px 2px);"></div>
<div style="left:39px;top:95px;width:9px;height:9px;background:#fff;border:1px solid #9a9a9a;"></div>
<div style="left:41px;top:99px;width:5px;height:1px;background:#000;"></div>
<div style="left:43px;top:97px;width:1px;height:5px;background:#000;"></div>
<svg class="i" style="left:56px;top:90px" width="26" height="18" viewBox="0 0 26 18"><path d="M11 4.200L15.600 .9H24.100V11.600H11z" fill="#c2c2c2"/><path d="M15.800 2.300h7.400" stroke="#dedede" stroke-width="1"/><rect x="1.100" y="5.100" width="3.800" height="11.200" fill="#3a3a3a"/><rect x="6.300" y="5.100" width="3.800" height="11.200" fill="#3a3a3a"/><rect x="11.400" y="11.600" width="3.800" height="4.700" fill="#3a3a3a"/><g fill="#fff"><rect x="2.100" y="6.600" width="1.800" height="1.400"/><rect x="7.300" y="6.600" width="1.800" height="1.400"/><rect x="2.100" y="12" width="1.800" height="1.200"/><rect x="7.300" y="12" width="1.800" height="1.200"/><rect x="12.400" y="12.600" width="1.800" height="1"/><rect x="2.100" y="14.200" width="1.800" height="1"/><rect x="7.300" y="14.200" width="1.800" height="1"/><rect x="12.400" y="14.400" width="1.800" height="1"/></g></svg>
<span class="t" style="top:91.34px;font:12px/17px 'Liberation Sans',sans-serif;color:#000;left:87px;transform:scaleX(0.9483);transform-origin:0 0;">AIModbusTCP</span>
<span class="t" style="top:91.34px;font:12px/17px 'Liberation Sans',sans-serif;color:#000;left:161px;">Master</span>
<div style="left:49px;top:117px;width:8px;height:1px;background:repeating-linear-gradient(90deg,#a8a8a8 0 1px,transparent 1px 2px);"></div>
<div style="left:39px;top:113px;width:9px;height:9px;background:#fff;border:1px solid #9a9a9a;"></div>
<div style="left:41px;top:117px;width:5px;height:1px;background:#000;"></div>
<div style="left:43px;top:115px;width:1px;height:5px;background:#000;"></div>
<svg class="i" style="left:56px;top:108px" width="26" height="18" viewBox="0 0 26 18"><path d="M11 4.200L15.600 .9H24.100V11.600H11z" fill="#c2c2c2"/><path d="M15.800 2.300h7.400" stroke="#dedede" stroke-width="1"/><rect x="1.100" y="5.100" width="3.800" height="11.200" fill="#3a3a3a"/><rect x="6.300" y="5.100" width="3.800" height="11.200" fill="#3a3a3a"/><rect x="11.400" y="11.600" width="3.800" height="4.700" fill="#3a3a3a"/><g fill="#fff"><rect x="2.100" y="6.600" width="1.800" height="1.400"/><rect x="7.300" y="6.600" width="1.800" height="1.400"/><rect x="2.100" y="12" width="1.800" height="1.200"/><rect x="7.300" y="12" width="1.800" height="1.200"/><rect x="12.400" y="12.600" width="1.800" height="1"/><rect x="2.100" y="14.200" width="1.800" height="1"/><rect x="7.300" y="14.200" width="1.800" height="1"/><rect x="12.400" y="14.400" width="1.800" height="1"/></g></svg>
<span class="t" style="top:109.34px;font:12px/17px 'Liberation Sans',sans-serif;color:#000;left:87px;letter-spacing:-0.213px;">Standard</span>
</div>
<div style="left:1426px;top:819px;width:169px;height:15px;background:#f0f0f0;"></div>
<div style="left:1444px;top:819px;width:112px;height:15px;background:#cdcdcd;"></div>
<div style="left:1496px;top:823px;width:2px;height:7px;background:#6a6a6a;"></div>
<div style="left:1499px;top:823px;width:2px;height:7px;background:#6a6a6a;"></div>
<div style="left:1502px;top:823px;width:2px;height:7px;background:#6a6a6a;"></div>
<svg class="i" style="left:1430px;top:821.5px" width="10" height="10" viewBox="0 0 10 10"><path d="M6.700 1.500L3.100 5l3.600 3.500" fill="none" stroke="#000" stroke-width="2.200"/></svg>
<svg class="i" style="left:1580px;top:821.5px" width="10" height="10" viewBox="0 0 10 10"><path d="M3.300 1.500L6.900 5 3.300 8.500" fill="none" stroke="#000" stroke-width="2.200"/></svg>
<div class="ph" style="left:1601px;top:163px;width:198px;height:21px;"></div>
<span class="t" style="top:166.34px;font:12px/17px 'Liberation Sans',sans-serif;color:#fff;left:1604px;transform:scaleX(0.9426);transform-origin:0 0;">Catalog</span>
<svg class="i" style="left:1768px;top:168px" width="28" height="11" viewBox="0 0 28 11"><path d="M2.800 .6h3.600M2.800 .6v5.200" fill="none" stroke="#fff" stroke-width="1.300"/><rect x="5" y="0" width="2.200" height="5.800" fill="#fff"/><rect x=".6" y="5.400" width="8" height="1.600" fill="#fff"/><rect x="3.800" y="6.800" width="1.600" height="3.600" fill="#fff"/><path d="M18.400 1.200l6.600 6.400M25 1.200l-6.600 6.400" stroke="#fff" stroke-width="1.700"/></svg>
<div style="left:1600px;top:185px;width:200px;height:796px;background:#fffffc;border:1px solid #c9c9c9;"></div>
<span class="t" style="top:189.34px;font:12px/17px 'Liberation Sans',sans-serif;color:#000;left:1607px;letter-spacing:-0.185px;">Device name</span>
<div style="left:1601px;top:964px;width:198px;height:15px;background:#f0f0f0;"></div>
<div style="left:1619px;top:964px;width:51px;height:15px;background:#cdcdcd;"></div>
<div style="left:1640px;top:968px;width:2px;height:7px;background:#6a6a6a;"></div>
<div style="left:1643px;top:968px;width:2px;height:7px;background:#6a6a6a;"></div>
<div style="left:1646px;top:968px;width:2px;height:7px;background:#6a6a6a;"></div>
<svg class="i" style="left:1605px;top:966.5px" width="10" height="10" viewBox="0 0 10 10"><path d="M6.700 1.500L3.100 5l3.600 3.500" fill="none" stroke="#000" stroke-width="2.200"/></svg>
<svg class="i" style="left:1784px;top:966.5px" width="10" height="10" viewBox="0 0 10 10"><path d="M3.300 1.500L6.900 5 3.300 8.500" fill="none" stroke="#000" stroke-width="2.200"/></svg>
<div class="ph" style="left:73px;top:842px;width:687px;height:21px;"></div>
<span class="t" style="top:845.34px;font:12px/17px 'Liberation Sans',sans-serif;color:#fff;left:76px;letter-spacing:0.328px;">Output</span>
<svg class="i" style="left:729px;top:847px" width="28" height="11" viewBox="0 0 28 11"><path d="M2.800 .6h3.600M2.800 .6v5.200" fill="none" stroke="#fff" stroke-width="1.300"/><rect x="5" y="0" width="2.200" height="5.800" fill="#fff"/><rect x=".6" y="5.400" width="8" height="1.600" fill="#fff"/><rect x="3.800" y="6.800" width="1.600" height="3.600" fill="#fff"/><path d="M18.400 1.200l6.600 6.400M25 1.200l-6.600 6.400" stroke="#fff" stroke-width="1.700"/></svg>
<div style="left:74px;top:866px;width:685px;height:92px;background:#fffffc;border:1px solid #c6c6c6;"></div>
<span class="t" style="left:76px;top:882px;font:12px/14px 'Liberation Mono',monospace;letter-spacing:0.8px">Connected to ArduinoOpta_1p1 on ARMThumb2_VFP2.</span>
<span class="t" style="left:76px;top:895px;font:12px/14px 'Liberation Mono',monospace;letter-spacing:0.8px">Target runtime version: 1.34.2</span>
<span class="t" style="left:76px;top:908px;font:12px/14px 'Liberation Mono',monospace;letter-spacing:0.8px">Target system info: 1.1.0 ArduinoOpta</span>
<div style="left:742px;top:867px;width:15px;height:90px;background:#f0f0f0;"></div>
<div style="left:742px;top:920px;width:15px;height:19px;background:#cdcdcd;"></div>
<div style="left:746px;top:925px;width:7px;height:2px;background:#6a6a6a;"></div>
<div style="left:746px;top:928px;width:7px;height:2px;background:#6a6a6a;"></div>
<div style="left:746px;top:931px;width:7px;height:2px;background:#6a6a6a;"></div>
<svg class="i" style="left:744.5px;top:871px" width="10" height="10" viewBox="0 0 10 10"><path d="M1.500 6.800L5 3.200l3.500 3.600" fill="none" stroke="#000" stroke-width="2.200"/></svg>
<svg class="i" style="left:744.5px;top:943px" width="10" height="10" viewBox="0 0 10 10"><path d="M1.500 3.200L5 6.800l3.500-3.600" fill="none" stroke="#000" stroke-width="2.200"/></svg>
<div style="left:75px;top:960px;width:37px;height:18px;background:#ffffff;"></div>
<span class="t" style="top:961.34px;font:12px/17px 'Liberation Sans',sans-serif;color:#1f8a9c;left:80px;letter-spacing:0.062px;">Build</span>
<div style="left:114px;top:960px;width:86px;height:18px;background:#dde4e8;"></div>
<span class="t" style="top:961.34px;font:12px/17px 'Liberation Sans',sans-serif;color:#000;left:119px;letter-spacing:0.042px;">Find in project</span>
<div style="left:202px;top:960px;width:44px;height:18px;background:#dde4e8;"></div>
<span class="t" style="top:961.34px;font:12px/17px 'Liberation Sans',sans-serif;color:#000;left:207px;letter-spacing:-0.075px;">Debug</span>
<div style="left:249px;top:960px;width:63px;height:18px;background:#dde4e8;"></div>
<span class="t" style="top:961.34px;font:12px/17px 'Liberation Sans',sans-serif;color:#000;left:254px;transform:scaleX(0.9240);transform-origin:0 0;">Resources</span>
<div class="ph" style="left:766px;top:842px;width:829px;height:21px;"></div>
<span class="t" style="top:845.34px;font:12px/17px 'Liberation Sans',sans-serif;color:#fff;left:769px;letter-spacing:-0.069px;">Symbols browser</span>
<svg class="i" style="left:1564px;top:847px" width="28" height="11" viewBox="0 0 28 11"><path d="M2.800 .6h3.600M2.800 .6v5.200" fill="none" stroke="#fff" stroke-width="1.300"/><rect x="5" y="0" width="2.200" height="5.800" fill="#fff"/><rect x=".6" y="5.400" width="8" height="1.600" fill="#fff"/><rect x="3.800" y="6.800" width="1.600" height="3.600" fill="#fff"/><path d="M18.400 1.200l6.600 6.400M25 1.200l-6.600 6.400" stroke="#fff" stroke-width="1.700"/></svg>
<span class="t" style="top:869.34px;font:12px/17px 'Liberation Sans',sans-serif;color:#000;left:771px;letter-spacing:-0.059px;">Symbol name:</span>
<div style="left:852px;top:867px;width:198px;height:21px;background:#fdfdfd;"></div>
<span class="t" style="top:870.34px;font:12px/17px 'Liberation Sans',sans-serif;color:#9c9c9c;left:856px;letter-spacing:-0.016px;">type here to find symbols</span>
<span class="t" style="top:870.34px;font:12px/17px 'Liberation Sans',sans-serif;color:#000;left:1057px;letter-spacing:-0.096px;">Filters</span>
<svg class="i" style="left:1091px;top:875px" width="6" height="4" viewBox="0 0 6 4"><path d="M0 0h5.400L2.700 3z" fill="#333"/></svg>
<div style="left:1102px;top:866px;width:1px;height:23px;background:#d0d0d0;"></div>
<span class="t" style="top:869.34px;font:12px/17px 'Liberation Sans',sans-serif;color:#000;left:1110px;letter-spacing:0.051px;">Active filters: All</span>
<div style="left:765px;top:890px;width:831px;height:91px;background:#fffffc;border:1px solid #c9c9c9;"></div>
<div style="left:1065px;top:891px;width:1px;height:24px;background:#e4e4e4;"></div>
<div style="left:1185px;top:891px;width:1px;height:24px;background:#e4e4e4;"></div>
<div style="left:1305px;top:891px;width:1px;height:24px;background:#e4e4e4;"></div>
<span class="t" style="top:895.34px;font:12px/17px 'Liberation Sans',sans-serif;color:#000;left:772px;letter-spacing:-0.004px;">Name</span>
<span class="t" style="top:895.34px;font:12px/17px 'Liberation Sans',sans-serif;color:#000;left:1072px;transform:scaleX(0.9225);transform-origin:0 0;">Type</span>
<span class="t" style="top:895.34px;font:12px/17px 'Liberation Sans',sans-serif;color:#000;left:1192px;letter-spacing:0.078px;">Location</span>
<span class="t" style="top:984.34px;font:12px/17px 'Liberation Sans',sans-serif;color:#000;left:75px;transform:scaleX(0.9225);transform-origin:0 0;">Ready</span>
<div style="left:1351px;top:983px;width:142px;height:18px;background:#f0f0f0;border:1px solid #a9a9a9;"></div>
<span class="t" style="top:983.15px;font:bold 14px/20px 'Liberation Sans',sans-serif;color:#000;left:1386px;transform:scaleX(0.9257);transform-origin:0 0;">EDIT MODE</span>
<div style="left:1495px;top:983px;width:142px;height:18px;background:#008a00;border:1px solid #b8d8b8;"></div>
<span class="t" style="top:983.15px;font:bold 14px/20px 'Liberation Sans',sans-serif;color:#fff;left:1530px;transform:scaleX(0.8373);transform-origin:0 0;">SOURCE OK</span>
<div style="left:1639px;top:983px;width:142px;height:18px;background:#008a00;border:1px solid #b8d8b8;"></div>
<span class="t" style="top:983.15px;font:bold 14px/20px 'Liberation Sans',sans-serif;color:#fff;left:1671px;transform:scaleX(0.8796);transform-origin:0 0;">CONNECTED</span>
<svg class="i" style="left:1787px;top:988px" width="13" height="13" viewBox="0 0 13 13"><path d="M12.500 1L1 12.500M12.500 5L5 12.500M12.500 9L9 12.500" stroke="#a8a8a8" stroke-width="1"/></svg>
</body></html>
